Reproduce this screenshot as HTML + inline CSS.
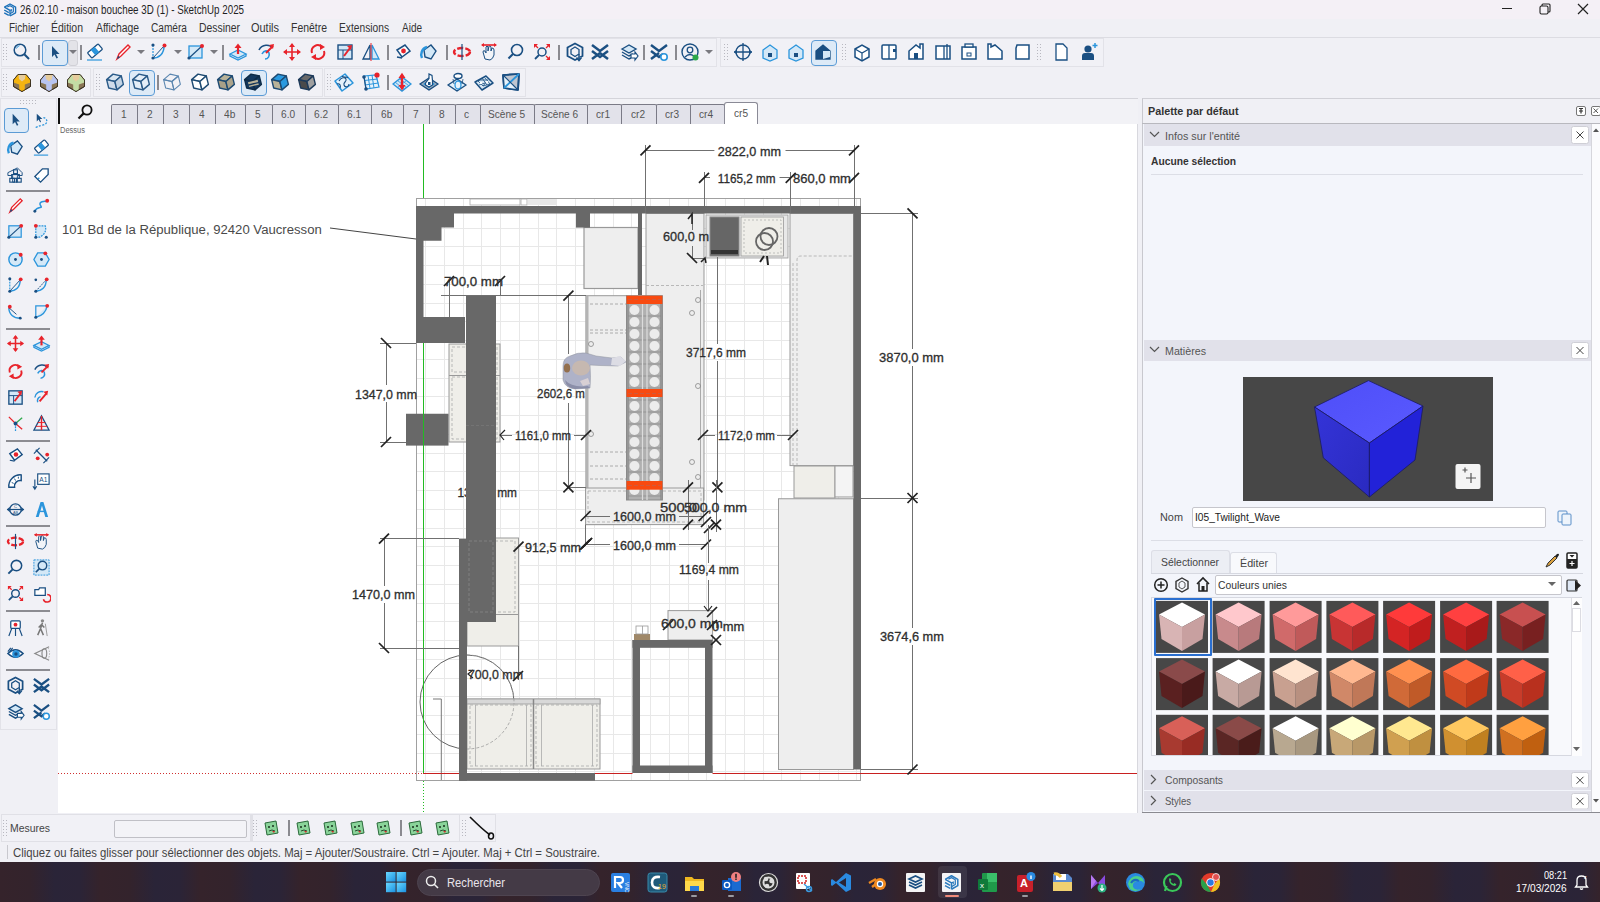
<!DOCTYPE html><html><head><meta charset="utf-8"><style>
*{margin:0;padding:0;box-sizing:border-box}
html,body{width:1600px;height:902px;overflow:hidden;background:#f0f0f5;font-family:"Liberation Sans",sans-serif;color:#333;position:relative}
.a{position:absolute;display:block}
.t{position:absolute;white-space:nowrap}
</style></head><body>
<div class="a" style="left:0px;top:0px;width:1600px;height:19px;background:#f4f0f6;"></div>
<svg class="a" style="left:2px;top:2px;" width="16" height="16" viewBox="0 0 16 16"><g transform="scale(0.8)"><g fill="none" stroke="#1a6fb8" stroke-linejoin="round"><path d="M3 6.5 L10 2.5 L17 6.5 L17 13.5 L10 17.5" stroke-width="1.7"/><path d="M6.5 6.3 L10 4.6 L14.2 7 L14.2 12.3 L10 14.6" stroke-width="1.4"/><path d="M3 6.5 L10 10.5 L10 17.5" stroke-width="1.7"/><path d="M2.8 10 L8.5 13.2 M2.8 13.5 L8.5 16.6" stroke-width="1.7"/><path d="M10 10.5 L12 9.3 L12 12" stroke-width="1.2"/></g></g></svg>
<div class="t" style="left:20.00px;top:4.14px;font-size:12px;line-height:12px;color:#1f1f1f;transform:scaleX(0.8151);transform-origin:0 0;">26.02.10 - maison bouchee 3D (1) - SketchUp 2025</div>
<div class="a" style="left:1502px;top:8px;width:10px;height:1.2px;background:#222;"></div>
<svg class="a" style="left:1539px;top:3px;" width="12" height="12" viewBox="0 0 12 12"><rect x="1" y="3" width="8" height="8" rx="1.5" fill="none" stroke="#222" stroke-width="1.1"/><path d="M3 3 L3 2 Q3 1 4 1 L10 1 Q11 1 11 2 L11 8 Q11 9 10 9 L9 9" fill="none" stroke="#222" stroke-width="1.1"/></svg>
<svg class="a" style="left:1577px;top:3px;" width="12" height="12" viewBox="0 0 12 12"><path d="M1 1 L11 11 M11 1 L1 11" stroke="#222" stroke-width="1.2"/></svg>
<div class="a" style="left:0px;top:19px;width:1600px;height:19px;background:#f0f0f5;"></div>
<div class="t" style="left:9.00px;top:22.34px;font-size:12px;line-height:12px;color:#333;transform:scaleX(0.8332);transform-origin:0 0;">Fichier</div>
<div class="t" style="left:51.00px;top:22.34px;font-size:12px;line-height:12px;color:#333;transform:scaleX(0.8722);transform-origin:0 0;">Édition</div>
<div class="t" style="left:96.00px;top:22.34px;font-size:12px;line-height:12px;color:#333;transform:scaleX(0.8632);transform-origin:0 0;">Affichage</div>
<div class="t" style="left:151.00px;top:22.34px;font-size:12px;line-height:12px;color:#333;transform:scaleX(0.8435);transform-origin:0 0;">Caméra</div>
<div class="t" style="left:199.00px;top:22.34px;font-size:12px;line-height:12px;color:#333;transform:scaleX(0.8659);transform-origin:0 0;">Dessiner</div>
<div class="t" style="left:251.00px;top:22.34px;font-size:12px;line-height:12px;color:#333;transform:scaleX(0.9128);transform-origin:0 0;">Outils</div>
<div class="t" style="left:291.00px;top:22.34px;font-size:12px;line-height:12px;color:#333;transform:scaleX(0.8705);transform-origin:0 0;">Fenêtre</div>
<div class="t" style="left:339.00px;top:22.34px;font-size:12px;line-height:12px;color:#333;transform:scaleX(0.8518);transform-origin:0 0;">Extensions</div>
<div class="t" style="left:402.00px;top:22.34px;font-size:12px;line-height:12px;color:#333;transform:scaleX(0.8327);transform-origin:0 0;">Aide</div>
<div class="a" style="left:0px;top:37px;width:1600px;height:1px;background:#dcdce2;"></div>
<div class="a" style="left:0px;top:38px;width:1600px;height:60px;background:#f0f0f5;"></div>
<div class="a" style="left:1px;top:38px;width:716px;height:29px;background:#f1f1f6;border:1px solid #e2e2e8;"></div>
<div class="a" style="left:720px;top:38px;width:384px;height:29px;background:#f1f1f6;border:1px solid #e2e2e8;"></div>
<div class="a" style="left:1px;top:68px;width:90px;height:29px;background:#f1f1f6;border:1px solid #e2e2e8;"></div>
<div class="a" style="left:93px;top:68px;width:230px;height:29px;background:#f1f1f6;border:1px solid #e2e2e8;"></div>
<div class="a" style="left:324px;top:68px;width:202px;height:29px;background:#f1f1f6;border:1px solid #e2e2e8;"></div>
<svg class="a" style="left:3px;top:44px;" width="4" height="18" viewBox="0 0 4 18"><rect x="0" y="0" width="1" height="1" fill="#b8b8c0"/><rect x="3" y="0" width="1" height="1" fill="#b8b8c0"/><rect x="0" y="3" width="1" height="1" fill="#b8b8c0"/><rect x="3" y="3" width="1" height="1" fill="#b8b8c0"/><rect x="0" y="6" width="1" height="1" fill="#b8b8c0"/><rect x="3" y="6" width="1" height="1" fill="#b8b8c0"/><rect x="0" y="9" width="1" height="1" fill="#b8b8c0"/><rect x="3" y="9" width="1" height="1" fill="#b8b8c0"/><rect x="0" y="12" width="1" height="1" fill="#b8b8c0"/><rect x="3" y="12" width="1" height="1" fill="#b8b8c0"/><rect x="0" y="15" width="1" height="1" fill="#b8b8c0"/><rect x="3" y="15" width="1" height="1" fill="#b8b8c0"/></svg>
<svg class="a" style="left:12px;top:42px;" width="20" height="20" viewBox="0 0 20 20"><g transform="scale(1.0)"><circle cx="8" cy="8" r="5.8" fill="none" stroke="#1a4f82" stroke-width="1.5"/><path d="M4.5 6.5a4 4 0 0 1 3-2.8" stroke="#2b95dc" stroke-width="1" fill="none"/><line x1="12.3" y1="12.3" x2="17" y2="17" stroke="#1a4f82" stroke-width="2"/></g></svg>
<div class="a" style="left:38px;top:45px;width:2px;height:15px;background:#8a8a90;"></div>
<div class="a" style="left:42px;top:40px;width:26px;height:26px;background:#ddeaf7;border:1.3px solid #5b9bd5;border-radius:4px;"></div>
<svg class="a" style="left:45px;top:42px;" width="20" height="20" viewBox="0 0 20 20"><g transform="scale(1.0)"><path d="M7 4 L7 15 L9.5 12.5 L11.5 16.5 L13 15.8 L11 12 L14.5 12 Z" fill="#1a4f82"/></g></svg>
<div class="a" style="left:68px;top:40px;width:10px;height:26px;background:#e3e3e8;border:1px solid #d0d0d6;border-radius:3px;"></div>
<svg class="a" style="left:69px;top:50px;" width="8" height="5" viewBox="0 0 8 5"><path d="M0 0 L8 0 L4 4Z" fill="#7a7a80"/></svg>
<div class="a" style="left:80px;top:45px;width:2px;height:15px;background:#8a8a90;"></div>
<svg class="a" style="left:85px;top:42px;" width="20" height="20" viewBox="0 0 20 20"><g transform="scale(1.0)"><g transform="rotate(-40 10 9)"><rect x="3" y="5.5" width="14" height="7" rx="1" fill="#fff" stroke="#1a4f82" stroke-width="1.3"/><rect x="7.5" y="5.5" width="5" height="7" fill="#2b95dc"/></g><line x1="2" y1="18" x2="17" y2="18" stroke="#2b95dc" stroke-width="1.2"/></g></svg>
<svg class="a" style="left:113px;top:42px;" width="20" height="20" viewBox="0 0 20 20"><g transform="scale(1.0)"><path d="M4 17 L6 12 L15 3 L17 5 L8 14 Z" fill="#fff" stroke="#e8232b" stroke-width="1.4"/><path d="M4 17 L5.2 13.8 L7 15.5Z" fill="#1a4f82"/></g></svg>
<svg class="a" style="left:137px;top:50px;" width="8" height="5" viewBox="0 0 8 5"><path d="M0 0 L8 0 L4 4Z" fill="#7a7a80"/></svg>
<svg class="a" style="left:149px;top:42px;" width="20" height="20" viewBox="0 0 20 20"><g transform="scale(1.0)"><line x1="4" y1="3" x2="4" y2="16" stroke="#2b95dc" stroke-width="1.2" stroke-dasharray="2 1"/><path d="M4 16 C10 16 15 12 15 4" fill="none" stroke="#2b95dc" stroke-width="1.5"/><line x1="4" y1="16" x2="15" y2="4" stroke="#1a4f82" stroke-width="1"/><circle cx="4" cy="3" r="1.6" fill="#1a4f82"/><circle cx="4" cy="16" r="1.6" fill="#1a4f82"/><circle cx="15.5" cy="3.5" r="2" fill="#e8232b"/></g></svg>
<svg class="a" style="left:174px;top:50px;" width="8" height="5" viewBox="0 0 8 5"><path d="M0 0 L8 0 L4 4Z" fill="#7a7a80"/></svg>
<svg class="a" style="left:186px;top:42px;" width="20" height="20" viewBox="0 0 20 20"><g transform="scale(1.0)"><rect x="3" y="4" width="13" height="12" fill="#d4e8f7" stroke="#2b95dc" stroke-width="1.3"/><line x1="3" y1="16" x2="16" y2="4" stroke="#1a4f82" stroke-width="1.2"/><circle cx="3" cy="16" r="1.6" fill="#1a4f82"/><circle cx="16" cy="4" r="2" fill="#e8232b"/></g></svg>
<svg class="a" style="left:210px;top:50px;" width="8" height="5" viewBox="0 0 8 5"><path d="M0 0 L8 0 L4 4Z" fill="#7a7a80"/></svg>
<div class="a" style="left:222px;top:45px;width:2px;height:15px;background:#8a8a90;"></div>
<svg class="a" style="left:228px;top:42px;" width="20" height="20" viewBox="0 0 20 20"><g transform="scale(1.0)"><path d="M2 12 L10 8 L18 12 L10 16Z" fill="#d4e8f7" stroke="#2b95dc" stroke-width="1.3"/><path d="M2 12 L2 14 L10 18 L18 14 L18 12" fill="none" stroke="#2b95dc" stroke-width="1.3"/><path d="M10 12 L10 5" stroke="#e8232b" stroke-width="2.2"/><path d="M6.5 6 L10 1.5 L13.5 6Z" fill="#e8232b"/></g></svg>
<svg class="a" style="left:256px;top:42px;" width="20" height="20" viewBox="0 0 20 20"><g transform="scale(1.0)"><path d="M3 8 C6 2 14 2 16 6" fill="none" stroke="#1a4f82" stroke-width="1.6"/><path d="M6 12 C8 8 12 8 13 11 C14 14 12 17 9 17" fill="none" stroke="#2b95dc" stroke-width="1.6"/><path d="M10 11 L17 4" stroke="#e8232b" stroke-width="2"/><path d="M13 3 L18 2 L17 7Z" fill="#e8232b"/></g></svg>
<svg class="a" style="left:282px;top:42px;" width="20" height="20" viewBox="0 0 20 20"><g transform="scale(1.0)"><path d="M10 2 L10 18 M2 10 L18 10" stroke="#e8232b" stroke-width="1.6"/><path d="M10 1 L7 5 L13 5Z M10 19 L7 15 L13 15Z M1 10 L5 7 L5 13Z M19 10 L15 7 L15 13Z" fill="#e8232b"/></g></svg>
<svg class="a" style="left:308px;top:42px;" width="20" height="20" viewBox="0 0 20 20"><g transform="scale(1.0)"><path d="M4 11 A6 6 0 0 1 14 5" fill="none" stroke="#e8232b" stroke-width="2"/><path d="M16 9 A6 6 0 0 1 6 15" fill="none" stroke="#e8232b" stroke-width="2"/><path d="M12 2 L17 5 L12 8Z M8 12 L3 15 L8 18Z" fill="#e8232b"/></g></svg>
<svg class="a" style="left:335px;top:42px;" width="20" height="20" viewBox="0 0 20 20"><g transform="scale(1.0)"><rect x="3" y="3" width="14" height="14" fill="#d4e8f7" stroke="#1a4f82" stroke-width="1.4"/><line x1="3" y1="8" x2="17" y2="8" stroke="#1a4f82" stroke-width="1"/><line x1="8" y1="8" x2="8" y2="17" stroke="#1a4f82" stroke-width="1"/><path d="M9 14 L15 6" stroke="#e8232b" stroke-width="2"/><path d="M12 4 L17 3 L16 8Z" fill="#e8232b"/></g></svg>
<svg class="a" style="left:361px;top:42px;" width="20" height="20" viewBox="0 0 20 20"><g transform="scale(1.0)"><path d="M9 3 L2 17 L9 17Z" fill="none" stroke="#1a4f82" stroke-width="1.3"/><path d="M11 3 L18 17 L11 17Z" fill="#d4e8f7" stroke="#2b95dc" stroke-width="1.3"/><line x1="10" y1="1" x2="10" y2="19" stroke="#e8232b" stroke-width="1"/></g></svg>
<div class="a" style="left:387px;top:45px;width:2px;height:15px;background:#8a8a90;"></div>
<svg class="a" style="left:393px;top:42px;" width="20" height="20" viewBox="0 0 20 20"><g transform="scale(1.0)"><path d="M4 8 L12 3 L17 9 L9 15Z" fill="#fff" stroke="#1a4f82" stroke-width="1.5"/><circle cx="10.5" cy="9" r="2.4" fill="#e8232b"/><path d="M4 15 L9 16" stroke="#1a4f82" stroke-width="1.3"/></g></svg>
<svg class="a" style="left:419px;top:42px;" width="20" height="20" viewBox="0 0 20 20"><g transform="scale(1.0)"><path d="M5 8 L12 3 L17 9 L12 17 L6 15Z" fill="#d4e8f7" stroke="#1a4f82" stroke-width="1.4"/><path d="M8 5 C3 6 1 12 3 16" fill="none" stroke="#2b95dc" stroke-width="2.5"/></g></svg>
<div class="a" style="left:446px;top:45px;width:2px;height:15px;background:#8a8a90;"></div>
<svg class="a" style="left:452px;top:42px;" width="20" height="20" viewBox="0 0 20 20"><g transform="scale(1.0)"><ellipse cx="10" cy="10" rx="8" ry="4" fill="none" stroke="#e8232b" stroke-width="2.4" stroke-dasharray="6 2"/><line x1="10" y1="2" x2="10" y2="18" stroke="#1a4f82" stroke-width="1.2"/></g></svg>
<svg class="a" style="left:479px;top:42px;" width="20" height="20" viewBox="0 0 20 20"><g transform="scale(1.0)"><path d="M6 17 L4 10 Q4 8 6 9 L7 11 L7 5 Q8 3 9 5 L9 9 L10 4 Q11 3 12 5 L12 9 L13 6 Q15 6 15 8 L15 13 Q14 17 11 18Z" fill="#f2f4f8" stroke="#1a4f82" stroke-width="1"/><path d="M3 3 L17 3" stroke="#e8232b" stroke-width="1.6"/><path d="M2 3 L5 1 L5 5Z M18 3 L15 1 L15 5Z" fill="#e8232b"/></g></svg>
<svg class="a" style="left:506px;top:42px;" width="20" height="20" viewBox="0 0 20 20"><g transform="scale(1.0)"><circle cx="11" cy="8" r="5.5" fill="none" stroke="#1a4f82" stroke-width="1.6"/><line x1="7" y1="12" x2="2.5" y2="16.5" stroke="#1a4f82" stroke-width="2"/></g></svg>
<svg class="a" style="left:532px;top:42px;" width="20" height="20" viewBox="0 0 20 20"><g transform="scale(1.0)"><circle cx="10" cy="10" r="4" fill="none" stroke="#1a4f82" stroke-width="1.5"/><line x1="7" y1="13" x2="3" y2="17" stroke="#1a4f82" stroke-width="1.8"/><path d="M2 2 L6 2 L2 6Z M18 2 L14 2 L18 6Z M18 18 L14 18 L18 14Z" fill="#e8232b"/><path d="M3 3 L6 6 M17 3 L14 6 M17 17 L14 14" stroke="#e8232b" stroke-width="1.3"/></g></svg>
<div class="a" style="left:558px;top:45px;width:2px;height:15px;background:#8a8a90;"></div>
<svg class="a" style="left:565px;top:42px;" width="20" height="20" viewBox="0 0 20 20"><g transform="scale(1.0)"><path d="M10 1.5 L17.5 5.5 L17.5 14 L10 18 L2.5 14 L2.5 5.5Z" fill="none" stroke="#1a4f82" stroke-width="1.8"/><path d="M10 5 L14 7.5 L14 12 L10 14.5 L6 12 L6 7.5Z" fill="none" stroke="#1a4f82" stroke-width="1.3"/><path d="M14 12 L14 18 M11.5 15.5 L14 18.5 L16.5 15.5" stroke="#1a4f82" stroke-width="1.5" fill="#fff"/></g></svg>
<svg class="a" style="left:590px;top:42px;" width="20" height="20" viewBox="0 0 20 20"><g transform="scale(1.0)"><path d="M2 3 L10 9 L18 3 M2 9 L10 15 L18 9 M2 17 L10 11 L18 17" fill="none" stroke="#1a4f82" stroke-width="2.5"/></g></svg>
<svg class="a" style="left:619px;top:42px;" width="20" height="20" viewBox="0 0 20 20"><g transform="scale(1.0)"><path d="M3 7 L10 3 L17 7 L10 11Z" fill="#d4e8f7" stroke="#1a4f82" stroke-width="1.4"/><path d="M3 10 L10 14 L14 12 M3 13 L10 17 L12 16" fill="none" stroke="#1a4f82" stroke-width="1.4"/><path d="M12 12 L16 12 L16 10 L19 14 L16 18 L16 16 L12 16Z" fill="#fff" stroke="#1a4f82" stroke-width="1.2"/></g></svg>
<div class="a" style="left:643px;top:45px;width:2px;height:15px;background:#8a8a90;"></div>
<svg class="a" style="left:649px;top:42px;" width="20" height="20" viewBox="0 0 20 20"><g transform="scale(1.0)"><path d="M2 3 L10 9 L18 3 M2 9 L10 15 L14 12 M2 17 L10 11" fill="none" stroke="#1a4f82" stroke-width="2.4"/><circle cx="15" cy="15" r="3.2" fill="#fff" stroke="#2b95dc" stroke-width="1.6"/></g></svg>
<div class="a" style="left:675px;top:45px;width:2px;height:15px;background:#8a8a90;"></div>
<svg class="a" style="left:680px;top:42px;" width="20" height="20" viewBox="0 0 20 20"><g transform="scale(1.0)"><circle cx="10" cy="10" r="8" fill="none" stroke="#1a4f82" stroke-width="1.4"/><circle cx="10" cy="8" r="2.8" fill="none" stroke="#1a4f82" stroke-width="1.3"/><path d="M5 15 Q10 10 15 15" fill="none" stroke="#1a4f82" stroke-width="1.3"/><circle cx="15.5" cy="15.5" r="3" fill="#2ca84a"/></g></svg>
<svg class="a" style="left:705px;top:50px;" width="8" height="5" viewBox="0 0 8 5"><path d="M0 0 L8 0 L4 4Z" fill="#7a7a80"/></svg>
<svg class="a" style="left:724px;top:44px;" width="4" height="18" viewBox="0 0 4 18"><rect x="0" y="0" width="1" height="1" fill="#b8b8c0"/><rect x="3" y="0" width="1" height="1" fill="#b8b8c0"/><rect x="0" y="3" width="1" height="1" fill="#b8b8c0"/><rect x="3" y="3" width="1" height="1" fill="#b8b8c0"/><rect x="0" y="6" width="1" height="1" fill="#b8b8c0"/><rect x="3" y="6" width="1" height="1" fill="#b8b8c0"/><rect x="0" y="9" width="1" height="1" fill="#b8b8c0"/><rect x="3" y="9" width="1" height="1" fill="#b8b8c0"/><rect x="0" y="12" width="1" height="1" fill="#b8b8c0"/><rect x="3" y="12" width="1" height="1" fill="#b8b8c0"/><rect x="0" y="15" width="1" height="1" fill="#b8b8c0"/><rect x="3" y="15" width="1" height="1" fill="#b8b8c0"/></svg>
<svg class="a" style="left:733px;top:42px;" width="20" height="20" viewBox="0 0 20 20"><g transform="scale(1.0)"><circle cx="10" cy="10" r="7" fill="none" stroke="#1a4f82" stroke-width="1.3"/><path d="M1 10 L19 10 M10 1 L10 19" stroke="#1a4f82" stroke-width="1.3"/><path d="M1 10 L4 7 L4 13Z M19 10 L16 7 L16 13Z" fill="#1a4f82"/></g></svg>
<svg class="a" style="left:760px;top:42px;" width="20" height="20" viewBox="0 0 20 20"><g transform="scale(1.0)"><path d="M3 8 L10 3 L17 8 L17 16 L10 19 L3 16Z" fill="#d4e8f7" stroke="#2b95dc" stroke-width="1.3"/><path d="M8 11 L12 11 L12 15 L8 15Z" fill="#1a4f82"/></g></svg>
<svg class="a" style="left:786px;top:42px;" width="20" height="20" viewBox="0 0 20 20"><g transform="scale(1.0)"><path d="M3 8 L10 3 L17 8 L17 16 L10 19 L3 16Z" fill="#d4e8f7" stroke="#2b95dc" stroke-width="1.3"/><path d="M8 11 L12 11 L12 15 L8 15Z" fill="#1a4f82"/></g></svg>
<div class="a" style="left:811px;top:40px;width:26px;height:26px;background:#ddeaf7;border:1.3px solid #5b9bd5;border-radius:4px;"></div>
<svg class="a" style="left:813px;top:42px;" width="20" height="20" viewBox="0 0 20 20"><g transform="scale(1.0)"><path d="M3 9 L10 3 L17 9 L17 17 L3 17Z" fill="#1a4f82" stroke="#1a4f82" stroke-width="1.3"/><path d="M10 9 L17 9 L17 15 L10 17Z" fill="#d4e8f7"/></g></svg>
<svg class="a" style="left:842px;top:44px;" width="4" height="18" viewBox="0 0 4 18"><rect x="0" y="0" width="1" height="1" fill="#b8b8c0"/><rect x="3" y="0" width="1" height="1" fill="#b8b8c0"/><rect x="0" y="3" width="1" height="1" fill="#b8b8c0"/><rect x="3" y="3" width="1" height="1" fill="#b8b8c0"/><rect x="0" y="6" width="1" height="1" fill="#b8b8c0"/><rect x="3" y="6" width="1" height="1" fill="#b8b8c0"/><rect x="0" y="9" width="1" height="1" fill="#b8b8c0"/><rect x="3" y="9" width="1" height="1" fill="#b8b8c0"/><rect x="0" y="12" width="1" height="1" fill="#b8b8c0"/><rect x="3" y="12" width="1" height="1" fill="#b8b8c0"/><rect x="0" y="15" width="1" height="1" fill="#b8b8c0"/><rect x="3" y="15" width="1" height="1" fill="#b8b8c0"/></svg>
<svg class="a" style="left:852px;top:42px;" width="20" height="20" viewBox="0 0 20 20"><g transform="scale(1.0)"><path d="M3 7 L10 3 L17 7 L17 15 L10 19 L3 15Z" fill="#fff" stroke="#1a4f82" stroke-width="1.5"/><path d="M3 7 L10 11 L17 7 M10 11 L10 19" fill="none" stroke="#1a4f82" stroke-width="1.2"/></g></svg>
<svg class="a" style="left:879px;top:42px;" width="20" height="20" viewBox="0 0 20 20"><g transform="scale(1.0)"><rect x="3" y="3" width="14" height="14" rx="1" fill="#fff" stroke="#1a4f82" stroke-width="1.5"/><line x1="10" y1="3" x2="10" y2="17" stroke="#1a4f82" stroke-width="1.3"/><rect x="14" y="7" width="3" height="3" fill="#1a4f82"/></g></svg>
<svg class="a" style="left:906px;top:42px;" width="20" height="20" viewBox="0 0 20 20"><g transform="scale(1.0)"><path d="M3 17 L3 9 L10 3 L14 6 L14 2 L17 2 L17 17Z" fill="#fff" stroke="#1a4f82" stroke-width="1.5"/><rect x="8" y="11" width="4" height="6" fill="#1a4f82"/></g></svg>
<svg class="a" style="left:933px;top:42px;" width="20" height="20" viewBox="0 0 20 20"><g transform="scale(1.0)"><rect x="3" y="4" width="14" height="13" fill="#fff" stroke="#1a4f82" stroke-width="1.5"/><line x1="11" y1="4" x2="11" y2="17" stroke="#1a4f82" stroke-width="1.3"/><line x1="14" y1="2" x2="14" y2="17" stroke="#1a4f82" stroke-width="1.3"/></g></svg>
<svg class="a" style="left:959px;top:42px;" width="20" height="20" viewBox="0 0 20 20"><g transform="scale(1.0)"><rect x="3" y="5" width="14" height="12" fill="#fff" stroke="#1a4f82" stroke-width="1.5"/><rect x="6" y="2" width="8" height="3" fill="#fff" stroke="#1a4f82" stroke-width="1.3"/><rect x="8" y="11" width="4" height="3" fill="none" stroke="#1a4f82" stroke-width="1"/></g></svg>
<svg class="a" style="left:985px;top:42px;" width="20" height="20" viewBox="0 0 20 20"><g transform="scale(1.0)"><path d="M3 17 L3 2 L6 2 L6 5 L10 3 L17 9 L17 17Z" fill="#fff" stroke="#1a4f82" stroke-width="1.5"/></g></svg>
<svg class="a" style="left:1012px;top:42px;" width="20" height="20" viewBox="0 0 20 20"><g transform="scale(1.0)"><path d="M5 3 L17 3 L17 17 L4 17 L4 6Z" fill="#fff" stroke="#1a4f82" stroke-width="1.5"/></g></svg>
<svg class="a" style="left:1037px;top:44px;" width="4" height="18" viewBox="0 0 4 18"><rect x="0" y="0" width="1" height="1" fill="#b8b8c0"/><rect x="3" y="0" width="1" height="1" fill="#b8b8c0"/><rect x="0" y="3" width="1" height="1" fill="#b8b8c0"/><rect x="3" y="3" width="1" height="1" fill="#b8b8c0"/><rect x="0" y="6" width="1" height="1" fill="#b8b8c0"/><rect x="3" y="6" width="1" height="1" fill="#b8b8c0"/><rect x="0" y="9" width="1" height="1" fill="#b8b8c0"/><rect x="3" y="9" width="1" height="1" fill="#b8b8c0"/><rect x="0" y="12" width="1" height="1" fill="#b8b8c0"/><rect x="3" y="12" width="1" height="1" fill="#b8b8c0"/><rect x="0" y="15" width="1" height="1" fill="#b8b8c0"/><rect x="3" y="15" width="1" height="1" fill="#b8b8c0"/></svg>
<svg class="a" style="left:1051px;top:42px;" width="20" height="20" viewBox="0 0 20 20"><g transform="scale(1.0)"><path d="M5 2 L12 2 L16 6 L16 18 L5 18Z" fill="#fff" stroke="#1a4f82" stroke-width="1.3"/></g></svg>
<svg class="a" style="left:1079px;top:42px;" width="20" height="20" viewBox="0 0 20 20"><g transform="scale(1.0)"><circle cx="9" cy="7" r="3.6" fill="#1a4f82"/><path d="M3 18 L3 14 Q3 11 6 11 L12 11 Q15 11 15 14 L15 18Z" fill="#1a4f82"/><path d="M16 1 L16 6 M13.5 3.5 L18.5 3.5" stroke="#2b95dc" stroke-width="1.5"/></g></svg>
<svg class="a" style="left:3px;top:74px;" width="4" height="18" viewBox="0 0 4 18"><rect x="0" y="0" width="1" height="1" fill="#b8b8c0"/><rect x="3" y="0" width="1" height="1" fill="#b8b8c0"/><rect x="0" y="3" width="1" height="1" fill="#b8b8c0"/><rect x="3" y="3" width="1" height="1" fill="#b8b8c0"/><rect x="0" y="6" width="1" height="1" fill="#b8b8c0"/><rect x="3" y="6" width="1" height="1" fill="#b8b8c0"/><rect x="0" y="9" width="1" height="1" fill="#b8b8c0"/><rect x="3" y="9" width="1" height="1" fill="#b8b8c0"/><rect x="0" y="12" width="1" height="1" fill="#b8b8c0"/><rect x="3" y="12" width="1" height="1" fill="#b8b8c0"/><rect x="0" y="15" width="1" height="1" fill="#b8b8c0"/><rect x="3" y="15" width="1" height="1" fill="#b8b8c0"/></svg>
<svg class="a" style="left:12px;top:72px;" width="20" height="20" viewBox="0 0 20 20"><g transform="scale(1.0)"><path d="M1.5 8 L6 2.5 L14 2.5 L18.5 8 L18.5 14.5 L10 19.5 L1.5 14.5Z" fill="#8a7656" stroke="#3a3020" stroke-width="0.9" stroke-linejoin="round"/><path d="M1.5 8 L6 2.5 L14 2.5 L18.5 8 L18.5 10.5 L12.8 12.5 L12.8 19 L7.2 19 L7.2 12.5 L1.5 10.5Z" fill="#f4b410"/><path d="M6.5 3 L13.5 3 L13 7 L10 9.5 L7 7Z" fill="#e6cc9c"/><path d="M1.5 8 L6 2.5 L14 2.5 L18.5 8 L18.5 14.5 L10 19.5 L1.5 14.5Z" fill="none" stroke="#3a3020" stroke-width="0.9" stroke-linejoin="round"/></g></svg>
<svg class="a" style="left:39px;top:72px;" width="20" height="20" viewBox="0 0 20 20"><g transform="scale(1.0)"><path d="M1.5 8 L6 2.5 L14 2.5 L18.5 8 L18.5 14.5 L10 19.5 L1.5 14.5Z" fill="#8a7656" stroke="#3a3020" stroke-width="0.9" stroke-linejoin="round"/><path d="M1.5 8 L6 2.5 L14 2.5 L18.5 8 L18.5 10.5 L12.8 12.5 L12.8 19 L7.2 19 L7.2 12.5 L1.5 10.5Z" fill="#b8c4f0"/><path d="M6.5 3 L13.5 3 L13 7 L10 9.5 L7 7Z" fill="#e6cc9c"/><path d="M1.5 8 L6 2.5 L14 2.5 L18.5 8 L18.5 14.5 L10 19.5 L1.5 14.5Z" fill="none" stroke="#3a3020" stroke-width="0.9" stroke-linejoin="round"/></g></svg>
<svg class="a" style="left:66px;top:72px;" width="20" height="20" viewBox="0 0 20 20"><g transform="scale(1.0)"><path d="M1.5 8 L6 2.5 L14 2.5 L18.5 8 L18.5 14.5 L10 19.5 L1.5 14.5Z" fill="#8a7656" stroke="#3a3020" stroke-width="0.9" stroke-linejoin="round"/><path d="M1.5 8 L6 2.5 L14 2.5 L18.5 8 L18.5 10.5 L12.8 12.5 L12.8 19 L7.2 19 L7.2 12.5 L1.5 10.5Z" fill="#c4dca4"/><path d="M6.5 3 L13.5 3 L13 7 L10 9.5 L7 7Z" fill="#e6cc9c"/><path d="M1.5 8 L6 2.5 L14 2.5 L18.5 8 L18.5 14.5 L10 19.5 L1.5 14.5Z" fill="none" stroke="#3a3020" stroke-width="0.9" stroke-linejoin="round"/></g></svg>
<svg class="a" style="left:96px;top:74px;" width="4" height="18" viewBox="0 0 4 18"><rect x="0" y="0" width="1" height="1" fill="#b8b8c0"/><rect x="3" y="0" width="1" height="1" fill="#b8b8c0"/><rect x="0" y="3" width="1" height="1" fill="#b8b8c0"/><rect x="3" y="3" width="1" height="1" fill="#b8b8c0"/><rect x="0" y="6" width="1" height="1" fill="#b8b8c0"/><rect x="3" y="6" width="1" height="1" fill="#b8b8c0"/><rect x="0" y="9" width="1" height="1" fill="#b8b8c0"/><rect x="3" y="9" width="1" height="1" fill="#b8b8c0"/><rect x="0" y="12" width="1" height="1" fill="#b8b8c0"/><rect x="3" y="12" width="1" height="1" fill="#b8b8c0"/><rect x="0" y="15" width="1" height="1" fill="#b8b8c0"/><rect x="3" y="15" width="1" height="1" fill="#b8b8c0"/></svg>
<svg class="a" style="left:105px;top:72px;" width="20" height="20" viewBox="0 0 20 20"><g transform="scale(1.0)"><g transform="translate(10 10) rotate(-14) scale(1.08) translate(-10 -10)"><path d="M3 6 L10 2.5 L17 6 L10 9.5Z" fill="#dbe6f0" stroke="#2a5a88" stroke-width="1.3" stroke-linejoin="round"/><path d="M3 6 L10 9.5 L10 17.5 L3 14Z" fill="#d0dcea" stroke="#2a5a88" stroke-width="1.3" stroke-linejoin="round"/><path d="M17 6 L10 9.5 L10 17.5 L17 14Z" fill="#c4d4e4" stroke="#2a5a88" stroke-width="1.3" stroke-linejoin="round"/></g></g></svg>
<div class="a" style="left:129px;top:70px;width:26px;height:26px;background:#ddeaf7;border:1.3px solid #5b9bd5;border-radius:4px;"></div>
<svg class="a" style="left:131px;top:72px;" width="20" height="20" viewBox="0 0 20 20"><g transform="scale(1.0)"><g transform="translate(10 10) rotate(-14) scale(1.08) translate(-10 -10)"><path d="M3 6 L10 2.5 L17 6 L10 9.5Z" fill="#e4eef8" stroke="#2a5a88" stroke-width="1.3" stroke-linejoin="round"/><path d="M3 6 L10 9.5 L10 17.5 L3 14Z" fill="#e4eef8" stroke="#2a5a88" stroke-width="1.3" stroke-linejoin="round"/><path d="M17 6 L10 9.5 L10 17.5 L17 14Z" fill="#e4eef8" stroke="#2a5a88" stroke-width="1.3" stroke-linejoin="round"/></g></g></svg>
<div class="a" style="left:157px;top:75px;width:2px;height:15px;background:#8a8a90;"></div>
<svg class="a" style="left:162px;top:72px;" width="20" height="20" viewBox="0 0 20 20"><g transform="scale(1.0)"><g transform="translate(10 10) rotate(-14) scale(1.08) translate(-10 -10)"><path d="M3 6 L10 2.5 L17 6 L10 9.5Z" fill="none" stroke="#5a86b0" stroke-width="1" stroke-linejoin="round"/><path d="M3 6 L10 9.5 L10 17.5 L3 14Z" fill="none" stroke="#5a86b0" stroke-width="1" stroke-linejoin="round"/><path d="M17 6 L10 9.5 L10 17.5 L17 14Z" fill="none" stroke="#5a86b0" stroke-width="1" stroke-linejoin="round"/></g></g></svg>
<svg class="a" style="left:190px;top:72px;" width="20" height="20" viewBox="0 0 20 20"><g transform="scale(1.0)"><g transform="translate(10 10) rotate(-14) scale(1.08) translate(-10 -10)"><path d="M3 6 L10 2.5 L17 6 L10 9.5Z" fill="#fff" stroke="#1d4a72" stroke-width="1.3" stroke-linejoin="round"/><path d="M3 6 L10 9.5 L10 17.5 L3 14Z" fill="#fff" stroke="#1d4a72" stroke-width="1.3" stroke-linejoin="round"/><path d="M17 6 L10 9.5 L10 17.5 L17 14Z" fill="#fff" stroke="#1d4a72" stroke-width="1.3" stroke-linejoin="round"/></g></g></svg>
<svg class="a" style="left:216px;top:72px;" width="20" height="20" viewBox="0 0 20 20"><g transform="scale(1.0)"><g transform="translate(10 10) rotate(-14) scale(1.08) translate(-10 -10)"><path d="M3 6 L10 2.5 L17 6 L10 9.5Z" fill="#b8b298" stroke="#1d4a72" stroke-width="1.3" stroke-linejoin="round"/><path d="M3 6 L10 9.5 L10 17.5 L3 14Z" fill="#a8a088" stroke="#1d4a72" stroke-width="1.3" stroke-linejoin="round"/><path d="M17 6 L10 9.5 L10 17.5 L17 14Z" fill="#aca48c" stroke="#1d4a72" stroke-width="1.3" stroke-linejoin="round"/></g></g></svg>
<div class="a" style="left:241px;top:70px;width:26px;height:26px;background:#ddeaf7;border:1.3px solid #5b9bd5;border-radius:4px;"></div>
<svg class="a" style="left:243px;top:72px;" width="20" height="20" viewBox="0 0 20 20"><g transform="scale(1.0)"><g transform="translate(10 10) rotate(-14) scale(1.08) translate(-10 -10)"><path d="M3 6 L10 2.5 L17 6 L10 9.5Z" fill="#13385e" stroke="#0e2c48" stroke-width="1.3" stroke-linejoin="round"/><path d="M3 6 L10 9.5 L10 17.5 L3 14Z" fill="#13385e" stroke="#0e2c48" stroke-width="1.3" stroke-linejoin="round"/><path d="M17 6 L10 9.5 L10 17.5 L17 14Z" fill="#13385e" stroke="#0e2c48" stroke-width="1.3" stroke-linejoin="round"/></g><g transform="translate(10 10) rotate(-14) translate(-10 -10)"><rect x="5" y="9" width="10" height="2.2" fill="#b8b298"/><rect x="5" y="12.5" width="10" height="1.5" fill="#b8b298"/></g></g></svg>
<svg class="a" style="left:270px;top:72px;" width="20" height="20" viewBox="0 0 20 20"><g transform="scale(1.0)"><g transform="translate(10 10) rotate(-14) scale(1.08) translate(-10 -10)"><path d="M3 6 L10 2.5 L17 6 L10 9.5Z" fill="#2a9ae0" stroke="#1d4a72" stroke-width="1.3" stroke-linejoin="round"/><path d="M3 6 L10 9.5 L10 17.5 L3 14Z" fill="#b8b298" stroke="#1d4a72" stroke-width="1.3" stroke-linejoin="round"/><path d="M17 6 L10 9.5 L10 17.5 L17 14Z" fill="#2a9ae0" stroke="#1d4a72" stroke-width="1.3" stroke-linejoin="round"/></g></g></svg>
<svg class="a" style="left:297px;top:72px;" width="20" height="20" viewBox="0 0 20 20"><g transform="scale(1.0)"><g transform="translate(10 10) rotate(-14) scale(1.08) translate(-10 -10)"><path d="M3 6 L10 2.5 L17 6 L10 9.5Z" fill="#6a6a6a" stroke="#1d3a5a" stroke-width="1.3" stroke-linejoin="round"/><path d="M3 6 L10 9.5 L10 17.5 L3 14Z" fill="#4a4a4a" stroke="#1d3a5a" stroke-width="1.3" stroke-linejoin="round"/><path d="M17 6 L10 9.5 L10 17.5 L17 14Z" fill="#a0a0a0" stroke="#1d3a5a" stroke-width="1.3" stroke-linejoin="round"/></g></g></svg>
<svg class="a" style="left:327px;top:74px;" width="4" height="18" viewBox="0 0 4 18"><rect x="0" y="0" width="1" height="1" fill="#b8b8c0"/><rect x="3" y="0" width="1" height="1" fill="#b8b8c0"/><rect x="0" y="3" width="1" height="1" fill="#b8b8c0"/><rect x="3" y="3" width="1" height="1" fill="#b8b8c0"/><rect x="0" y="6" width="1" height="1" fill="#b8b8c0"/><rect x="3" y="6" width="1" height="1" fill="#b8b8c0"/><rect x="0" y="9" width="1" height="1" fill="#b8b8c0"/><rect x="3" y="9" width="1" height="1" fill="#b8b8c0"/><rect x="0" y="12" width="1" height="1" fill="#b8b8c0"/><rect x="3" y="12" width="1" height="1" fill="#b8b8c0"/><rect x="0" y="15" width="1" height="1" fill="#b8b8c0"/><rect x="3" y="15" width="1" height="1" fill="#b8b8c0"/></svg>
<svg class="a" style="left:334px;top:72px;" width="20" height="20" viewBox="0 0 20 20"><g transform="scale(1.0)"><path d="M1 9 L11 2 L19 11 L8 19Z" fill="#e6f2fb" stroke="#2b95dc" stroke-width="1.5" stroke-linejoin="round"/><path d="M5 9 C7 5 11 5 12 7 C13 10 9 10 10 13 C11 16 15 15 15 12 M3 12 C6 11 7 14 6 16 M8 4 C9 6 13 4 14 6" fill="none" stroke="#1a4f82" stroke-width="1.1"/></g></svg>
<svg class="a" style="left:361px;top:72px;" width="20" height="20" viewBox="0 0 20 20"><g transform="scale(1.0)"><path d="M3 4 L15 3 L18 15 L5 17Z" fill="#e6f2fb" stroke="#2b95dc" stroke-width="1.2"/><path d="M3.5 8.5 L16.5 7 M4 13 L17.5 11 M7 3.5 L9 16.5 M11 3.2 L13 16" stroke="#2b95dc" stroke-width="1"/><circle cx="16" cy="3" r="2.6" fill="#e8232b"/><circle cx="3" cy="5" r="1.8" fill="#1a4f82"/><circle cx="5" cy="17" r="1.8" fill="#1a4f82"/><path d="M3 5L5 17" stroke="#1a4f82" stroke-width="1.2"/></g></svg>
<div class="a" style="left:387px;top:75px;width:2px;height:15px;background:#8a8a90;"></div>
<svg class="a" style="left:392px;top:72px;" width="20" height="20" viewBox="0 0 20 20"><g transform="scale(1.0)"><path d="M1 12 L10 5 L19 12 L10 19Z" fill="#cfe6f7" stroke="#2b95dc" stroke-width="1.4"/><path d="M5.5 8.5L14.5 15.5M5.5 15.5L14.5 8.5M3.2 10.3L12 17M8 7L16.8 13.7" stroke="#2b95dc" stroke-width="0.8"/><path d="M10 3.5 L10 15.5" stroke="#e8232b" stroke-width="2.4"/><path d="M6.5 6 L10 0.8 L13.5 6Z M6.5 13 L10 18.5 L13.5 13Z" fill="#e8232b"/></g></svg>
<svg class="a" style="left:419px;top:72px;" width="20" height="20" viewBox="0 0 20 20"><g transform="scale(1.0)"><path d="M1 12 L10 6 L19 12 L10 18Z" fill="#a8b0bc" stroke="#1a4f82" stroke-width="1.5" stroke-linejoin="round"/><path d="M4 12 L10 8 L16 12 L10 16Z" fill="#2b95dc"/><path d="M6.5 11 L10 6.5 L10 2 L13 3.5 L13.5 9 L13.5 13 L10 15 L6.5 13Z" fill="#fff" stroke="#1a4f82" stroke-width="1.2"/><rect x="9" y="10" width="2.5" height="3" fill="#1a4f82"/></g></svg>
<svg class="a" style="left:447px;top:72px;" width="20" height="20" viewBox="0 0 20 20"><g transform="scale(1.0)"><path d="M1 13 L10 7 L19 13 L10 19Z" fill="#e6f2fb" stroke="#1a4f82" stroke-width="1.5" stroke-linejoin="round"/><ellipse cx="11" cy="4" rx="4" ry="2.5" fill="#fff" stroke="#1a4f82" stroke-width="1.4"/><ellipse cx="11" cy="13" rx="3" ry="4" fill="none" stroke="#2b95dc" stroke-width="1.3"/><path d="M6 7 L7 12 M16 7 L15 12" stroke="#1a4f82" stroke-width="0.8"/></g></svg>
<svg class="a" style="left:474px;top:72px;" width="20" height="20" viewBox="0 0 20 20"><g transform="scale(1.0)"><path d="M1 10 L12 4 L19 11 L8 18Z" fill="#d8e8f4" stroke="#1a4f82" stroke-width="1.5" stroke-linejoin="round"/><path d="M4 9 L9 14 L14 8 L6 8Z M9 14 L16 12 L11 6 M5 13 L11 11 M8 6 L13 13" fill="none" stroke="#1a4f82" stroke-width="0.8"/><circle cx="7" cy="11" r="1.2" fill="#fff"/><circle cx="13" cy="10" r="1.2" fill="#fff"/></g></svg>
<svg class="a" style="left:501px;top:72px;" width="20" height="20" viewBox="0 0 20 20"><g transform="scale(1.0)"><path d="M2 3 L18 2 L17 18 L3 16Z" fill="#c0c6d0" stroke="#1a4f82" stroke-width="1.7" stroke-linejoin="round"/><path d="M2 3 L17 18 L3 16Z" fill="#e6f2fb"/><path d="M2 3 L18 2 L17 18 L3 16Z" fill="none" stroke="#1a4f82" stroke-width="1.7" stroke-linejoin="round"/><line x1="3" y1="16" x2="18" y2="2" stroke="#2b95dc" stroke-width="1.8"/><line x1="2" y1="3" x2="17" y2="18" stroke="#1a4f82" stroke-width="1.2"/></g></svg>
<div class="a" style="left:0px;top:98px;width:1600px;height:1px;background:#d4d4da;"></div>
<div class="a" style="left:0px;top:98px;width:58px;height:715px;background:#f0f0f5;"></div>
<div class="a" style="left:0px;top:98px;width:57px;height:632px;background:#f1f1f6;border:1px solid #e2e2e8;"></div>
<svg class="a" style="left:20px;top:100px;" width="18" height="4" viewBox="0 0 18 4"><rect x="0" y="0" width="1" height="1" fill="#b8b8c0"/><rect x="0" y="3" width="1" height="1" fill="#b8b8c0"/><rect x="3" y="0" width="1" height="1" fill="#b8b8c0"/><rect x="3" y="3" width="1" height="1" fill="#b8b8c0"/><rect x="6" y="0" width="1" height="1" fill="#b8b8c0"/><rect x="6" y="3" width="1" height="1" fill="#b8b8c0"/><rect x="9" y="0" width="1" height="1" fill="#b8b8c0"/><rect x="9" y="3" width="1" height="1" fill="#b8b8c0"/><rect x="12" y="0" width="1" height="1" fill="#b8b8c0"/><rect x="12" y="3" width="1" height="1" fill="#b8b8c0"/><rect x="15" y="0" width="1" height="1" fill="#b8b8c0"/><rect x="15" y="3" width="1" height="1" fill="#b8b8c0"/></svg>
<div class="a" style="left:4px;top:108px;width:25px;height:25px;background:#ddeaf7;border:1.3px solid #5b9bd5;border-radius:4px;"></div>
<svg class="a" style="left:6px;top:110px;" width="19" height="19" viewBox="0 0 19 19"><g transform="scale(0.95)"><path d="M7 4 L7 15 L9.5 12.5 L11.5 16.5 L13 15.8 L11 12 L14.5 12 Z" fill="#1a4f82"/></g></svg>
<svg class="a" style="left:32px;top:110px;" width="19" height="19" viewBox="0 0 19 19"><g transform="scale(0.95)"><path d="M5 4 L5 12 L7 10 L8.5 13 L9.5 12.5 L8.3 9.6 L11 9.6Z" fill="#1a4f82"/><path d="M12 8 C17 9 17 15 11 16 C7 17 4 18 3 19" fill="none" stroke="#2b95dc" stroke-width="1.3" stroke-dasharray="2 1.5"/></g></svg>
<svg class="a" style="left:6px;top:138px;" width="19" height="19" viewBox="0 0 19 19"><g transform="scale(0.95)"><path d="M5 8 L12 3 L17 9 L12 17 L6 15Z" fill="#d4e8f7" stroke="#1a4f82" stroke-width="1.4"/><path d="M8 5 C3 6 1 12 3 16" fill="none" stroke="#2b95dc" stroke-width="2.5"/></g></svg>
<svg class="a" style="left:32px;top:138px;" width="19" height="19" viewBox="0 0 19 19"><g transform="scale(0.95)"><g transform="rotate(-40 10 9)"><rect x="3" y="5.5" width="14" height="7" rx="1" fill="#fff" stroke="#1a4f82" stroke-width="1.3"/><rect x="7.5" y="5.5" width="5" height="7" fill="#2b95dc"/></g><line x1="2" y1="18" x2="17" y2="18" stroke="#2b95dc" stroke-width="1.2"/></g></svg>
<svg class="a" style="left:6px;top:166px;" width="19" height="19" viewBox="0 0 19 19"><g transform="scale(0.95)"><path d="M10 2 L15 7 L15 10 L10 10 L10 17 L5 17 L5 10 L0 10 L0 7Z" transform="translate(2 0)" fill="none" stroke="#1a4f82" stroke-width="1"/><rect x="6" y="9" width="8" height="4" fill="none" stroke="#1a4f82" stroke-width="1.2"/><rect x="8" y="4" width="4" height="4" fill="none" stroke="#1a4f82" stroke-width="1.2"/><rect x="4" y="13" width="5" height="4" fill="none" stroke="#1a4f82" stroke-width="1.2"/><rect x="11" y="13" width="5" height="4" fill="none" stroke="#1a4f82" stroke-width="1.2"/></g></svg>
<svg class="a" style="left:32px;top:166px;" width="19" height="19" viewBox="0 0 19 19"><g transform="scale(0.95)"><path d="M3 11 L11 3 L17 3 L17 9 L9 17Z" fill="#fff" stroke="#1a4f82" stroke-width="1.4"/><circle cx="7" cy="13" r="1" fill="#2b95dc"/></g></svg>
<svg class="a" style="left:6px;top:196px;" width="19" height="19" viewBox="0 0 19 19"><g transform="scale(0.95)"><path d="M4 17 L6 12 L15 3 L17 5 L8 14 Z" fill="#fff" stroke="#e8232b" stroke-width="1.4"/><path d="M4 17 L5.2 13.8 L7 15.5Z" fill="#1a4f82"/></g></svg>
<svg class="a" style="left:32px;top:196px;" width="19" height="19" viewBox="0 0 19 19"><g transform="scale(0.95)"><path d="M3 16 C6 10 12 14 9 10 C6 6 14 5 15 6" fill="none" stroke="#2b95dc" stroke-width="1.6"/><circle cx="16" cy="5" r="2" fill="#e8232b"/><circle cx="3" cy="16" r="1.5" fill="#1a4f82"/></g></svg>
<svg class="a" style="left:6px;top:222px;" width="19" height="19" viewBox="0 0 19 19"><g transform="scale(0.95)"><rect x="3" y="4" width="13" height="12" fill="#d4e8f7" stroke="#2b95dc" stroke-width="1.3"/><line x1="3" y1="16" x2="16" y2="4" stroke="#1a4f82" stroke-width="1.2"/><circle cx="3" cy="16" r="1.6" fill="#1a4f82"/><circle cx="16" cy="4" r="2" fill="#e8232b"/></g></svg>
<svg class="a" style="left:32px;top:222px;" width="19" height="19" viewBox="0 0 19 19"><g transform="scale(0.95)"><path d="M4 4 L14 4 Q16 12 8 16 L4 16Z" fill="#d4e8f7" stroke="#2b95dc" stroke-width="1.3" stroke-dasharray="2 1"/><circle cx="4" cy="4" r="2" fill="#e8232b"/><circle cx="4" cy="16" r="1.6" fill="#1a4f82"/><circle cx="15" cy="16" r="1.6" fill="#1a4f82"/></g></svg>
<svg class="a" style="left:6px;top:250px;" width="19" height="19" viewBox="0 0 19 19"><g transform="scale(0.95)"><circle cx="10" cy="10" r="7" fill="#d4e8f7" stroke="#2b95dc" stroke-width="1.5"/><circle cx="10" cy="10" r="1.5" fill="#1a4f82"/><circle cx="15.5" cy="5" r="2" fill="#e8232b"/></g></svg>
<svg class="a" style="left:32px;top:250px;" width="19" height="19" viewBox="0 0 19 19"><g transform="scale(0.95)"><path d="M6 3 L14 3 L18 10 L14 17 L6 17 L2 10Z" fill="#d4e8f7" stroke="#2b95dc" stroke-width="1.4"/><circle cx="10" cy="10" r="1.5" fill="#1a4f82"/><circle cx="14" cy="3.5" r="2" fill="#e8232b"/></g></svg>
<svg class="a" style="left:6px;top:276px;" width="19" height="19" viewBox="0 0 19 19"><g transform="scale(0.95)"><line x1="4" y1="3" x2="4" y2="16" stroke="#2b95dc" stroke-width="1.2" stroke-dasharray="2 1"/><path d="M4 16 C10 16 15 12 15 4" fill="none" stroke="#2b95dc" stroke-width="1.5"/><line x1="4" y1="16" x2="15" y2="4" stroke="#1a4f82" stroke-width="1"/><circle cx="4" cy="3" r="1.6" fill="#1a4f82"/><circle cx="4" cy="16" r="1.6" fill="#1a4f82"/><circle cx="15.5" cy="3.5" r="2" fill="#e8232b"/></g></svg>
<svg class="a" style="left:32px;top:276px;" width="19" height="19" viewBox="0 0 19 19"><g transform="scale(0.95)"><path d="M4 16 C10 16 15 12 15 4" fill="none" stroke="#2b95dc" stroke-width="1.5"/><line x1="4" y1="16" x2="15" y2="4" stroke="#1a4f82" stroke-width="1" stroke-dasharray="2 1"/><circle cx="4" cy="16" r="1.6" fill="#1a4f82"/><circle cx="15.5" cy="3.5" r="2" fill="#e8232b"/><circle cx="4" cy="4" r="1.4" fill="#1a4f82"/></g></svg>
<svg class="a" style="left:6px;top:302px;" width="19" height="19" viewBox="0 0 19 19"><g transform="scale(0.95)"><path d="M3 6 C3 13 8 17 15 17" fill="none" stroke="#2b95dc" stroke-width="1.5"/><line x1="3" y1="6" x2="11" y2="13" stroke="#1a4f82" stroke-width="1"/><circle cx="4" cy="5" r="2" fill="#e8232b"/><circle cx="15" cy="17" r="1.5" fill="#1a4f82"/></g></svg>
<svg class="a" style="left:32px;top:302px;" width="19" height="19" viewBox="0 0 19 19"><g transform="scale(0.95)"><path d="M4 16 L4 4 L16 4" fill="none" stroke="#2b95dc" stroke-width="1.3"/><path d="M4 16 Q14 14 16 4" fill="#d4e8f7" stroke="#2b95dc" stroke-width="1.5"/><circle cx="4" cy="16" r="1.6" fill="#1a4f82"/><circle cx="16" cy="4" r="2" fill="#e8232b"/></g></svg>
<svg class="a" style="left:6px;top:334px;" width="19" height="19" viewBox="0 0 19 19"><g transform="scale(0.95)"><path d="M10 2 L10 18 M2 10 L18 10" stroke="#e8232b" stroke-width="1.6"/><path d="M10 1 L7 5 L13 5Z M10 19 L7 15 L13 15Z M1 10 L5 7 L5 13Z M19 10 L15 7 L15 13Z" fill="#e8232b"/></g></svg>
<svg class="a" style="left:32px;top:334px;" width="19" height="19" viewBox="0 0 19 19"><g transform="scale(0.95)"><path d="M2 12 L10 8 L18 12 L10 16Z" fill="#d4e8f7" stroke="#2b95dc" stroke-width="1.3"/><path d="M2 12 L2 14 L10 18 L18 14 L18 12" fill="none" stroke="#2b95dc" stroke-width="1.3"/><path d="M10 12 L10 5" stroke="#e8232b" stroke-width="2.2"/><path d="M6.5 6 L10 1.5 L13.5 6Z" fill="#e8232b"/></g></svg>
<svg class="a" style="left:6px;top:362px;" width="19" height="19" viewBox="0 0 19 19"><g transform="scale(0.95)"><path d="M4 11 A6 6 0 0 1 14 5" fill="none" stroke="#e8232b" stroke-width="2"/><path d="M16 9 A6 6 0 0 1 6 15" fill="none" stroke="#e8232b" stroke-width="2"/><path d="M12 2 L17 5 L12 8Z M8 12 L3 15 L8 18Z" fill="#e8232b"/></g></svg>
<svg class="a" style="left:32px;top:362px;" width="19" height="19" viewBox="0 0 19 19"><g transform="scale(0.95)"><path d="M3 8 C6 2 14 2 16 6" fill="none" stroke="#1a4f82" stroke-width="1.6"/><path d="M6 12 C8 8 12 8 13 11 C14 14 12 17 9 17" fill="none" stroke="#2b95dc" stroke-width="1.6"/><path d="M10 11 L17 4" stroke="#e8232b" stroke-width="2"/><path d="M13 3 L18 2 L17 7Z" fill="#e8232b"/></g></svg>
<svg class="a" style="left:6px;top:388px;" width="19" height="19" viewBox="0 0 19 19"><g transform="scale(0.95)"><rect x="3" y="3" width="14" height="14" fill="#d4e8f7" stroke="#1a4f82" stroke-width="1.4"/><line x1="3" y1="8" x2="17" y2="8" stroke="#1a4f82" stroke-width="1"/><line x1="8" y1="8" x2="8" y2="17" stroke="#1a4f82" stroke-width="1"/><path d="M9 14 L15 6" stroke="#e8232b" stroke-width="2"/><path d="M12 4 L17 3 L16 8Z" fill="#e8232b"/></g></svg>
<svg class="a" style="left:32px;top:388px;" width="19" height="19" viewBox="0 0 19 19"><g transform="scale(0.95)"><path d="M3 10 A7 7 0 0 1 12 4" fill="none" stroke="#2b95dc" stroke-width="1.5"/><path d="M6 15 A5 5 0 0 1 9 9" fill="none" stroke="#2b95dc" stroke-width="1.5"/><path d="M8 14 L15 6" stroke="#e8232b" stroke-width="2"/><path d="M12 4 L17 3 L16 8Z" fill="#e8232b"/></g></svg>
<svg class="a" style="left:6px;top:414px;" width="19" height="19" viewBox="0 0 19 19"><g transform="scale(0.95)"><path d="M10 10 L3 3" stroke="#e8232b" stroke-width="1.3"/><path d="M10 10 L17 4" stroke="#2ca84a" stroke-width="1.3"/><path d="M10 10 L10 18" stroke="#2b95dc" stroke-width="1.3" stroke-dasharray="2 1"/><path d="M10 10 L17 16" stroke="#e8232b" stroke-width="1.3"/><circle cx="10" cy="10" r="2" fill="#1a4f82"/></g></svg>
<svg class="a" style="left:32px;top:414px;" width="19" height="19" viewBox="0 0 19 19"><g transform="scale(0.95)"><path d="M10 2 L2 17 L18 17Z" fill="none" stroke="#1a4f82" stroke-width="1.3"/><path d="M10 2 L10 17" stroke="#e8232b" stroke-width="1.5"/><path d="M6 9 L14 9 M4 13 L16 13" stroke="#e8232b" stroke-width="1"/></g></svg>
<svg class="a" style="left:6px;top:446px;" width="19" height="19" viewBox="0 0 19 19"><g transform="scale(0.95)"><path d="M4 8 L12 3 L17 9 L9 15Z" fill="#fff" stroke="#1a4f82" stroke-width="1.5"/><circle cx="10.5" cy="9" r="2.4" fill="#e8232b"/><path d="M4 15 L9 16" stroke="#1a4f82" stroke-width="1.3"/></g></svg>
<svg class="a" style="left:32px;top:446px;" width="19" height="19" viewBox="0 0 19 19"><g transform="scale(0.95)"><path d="M4 4 L16 16" stroke="#1a4f82" stroke-width="1.3"/><path d="M2 8 L8 2 M12 18 L18 12" stroke="#1a4f82" stroke-width="1.2"/><circle cx="6" cy="13" r="2" fill="#e8232b"/><circle cx="16" cy="9" r="2" fill="#e8232b"/></g></svg>
<svg class="a" style="left:6px;top:472px;" width="19" height="19" viewBox="0 0 19 19"><g transform="scale(0.95)"><path d="M3 16 A12 12 0 0 1 16 3 L16 9 A6 6 0 0 0 9 16Z" fill="#fff" stroke="#1a4f82" stroke-width="1.5"/><path d="M6 11 L8 12 M9 7 L10 9 M13 5 L13 7" stroke="#1a4f82" stroke-width="1"/></g></svg>
<svg class="a" style="left:32px;top:472px;" width="19" height="19" viewBox="0 0 19 19"><g transform="scale(0.95)"><rect x="6" y="2" width="12" height="11" fill="#fff" stroke="#1a4f82" stroke-width="1.2"/><text x="12" y="10.5" font-size="7" font-family="Liberation Sans" text-anchor="middle" fill="#1a4f82">A1</text><path d="M3 8 L3 17 M1 15 L3 18 L5 15" stroke="#1a4f82" stroke-width="1.2" fill="none"/></g></svg>
<svg class="a" style="left:6px;top:500px;" width="19" height="19" viewBox="0 0 19 19"><g transform="scale(0.95)"><circle cx="10" cy="10" r="6" fill="none" stroke="#1a4f82" stroke-width="1.3"/><path d="M1 10 L19 10" stroke="#1a4f82" stroke-width="1.3"/><path d="M1 10 L4 7 L4 13Z M19 10 L16 7 L16 13Z" fill="#1a4f82"/><text x="10" y="8" font-size="4.5" text-anchor="middle" fill="#1a4f82" font-family="Liberation Sans">C</text><text x="10" y="15" font-size="4" text-anchor="middle" fill="#1a4f82" font-family="Liberation Sans">AB</text></g></svg>
<svg class="a" style="left:32px;top:500px;" width="19" height="19" viewBox="0 0 19 19"><g transform="scale(0.95)"><path d="M4 18 L9 2 L12 2 L17 18 L14 18 L10.5 6 L7 18Z" fill="#2b95dc"/><path d="M6 12 L14 12" stroke="#2b95dc" stroke-width="1.5"/></g></svg>
<svg class="a" style="left:6px;top:532px;" width="19" height="19" viewBox="0 0 19 19"><g transform="scale(0.95)"><ellipse cx="10" cy="10" rx="8" ry="4" fill="none" stroke="#e8232b" stroke-width="2.4" stroke-dasharray="6 2"/><line x1="10" y1="2" x2="10" y2="18" stroke="#1a4f82" stroke-width="1.2"/></g></svg>
<svg class="a" style="left:32px;top:532px;" width="19" height="19" viewBox="0 0 19 19"><g transform="scale(0.95)"><path d="M6 17 L4 10 Q4 8 6 9 L7 11 L7 5 Q8 3 9 5 L9 9 L10 4 Q11 3 12 5 L12 9 L13 6 Q15 6 15 8 L15 13 Q14 17 11 18Z" fill="#f2f4f8" stroke="#1a4f82" stroke-width="1"/><path d="M3 3 L17 3" stroke="#e8232b" stroke-width="1.6"/><path d="M2 3 L5 1 L5 5Z M18 3 L15 1 L15 5Z" fill="#e8232b"/></g></svg>
<svg class="a" style="left:6px;top:558px;" width="19" height="19" viewBox="0 0 19 19"><g transform="scale(0.95)"><circle cx="11" cy="8" r="5.5" fill="none" stroke="#1a4f82" stroke-width="1.6"/><line x1="7" y1="12" x2="2.5" y2="16.5" stroke="#1a4f82" stroke-width="2"/></g></svg>
<svg class="a" style="left:32px;top:558px;" width="19" height="19" viewBox="0 0 19 19"><g transform="scale(0.95)"><rect x="2" y="2" width="16" height="16" fill="#d4e8f7" stroke="#2b95dc" stroke-width="1" stroke-dasharray="2 1"/><circle cx="11" cy="8" r="4.5" fill="none" stroke="#1a4f82" stroke-width="1.5"/><line x1="8" y1="11" x2="4" y2="15" stroke="#1a4f82" stroke-width="1.8"/></g></svg>
<svg class="a" style="left:6px;top:584px;" width="19" height="19" viewBox="0 0 19 19"><g transform="scale(0.95)"><circle cx="10" cy="10" r="4" fill="none" stroke="#1a4f82" stroke-width="1.5"/><line x1="7" y1="13" x2="3" y2="17" stroke="#1a4f82" stroke-width="1.8"/><path d="M2 2 L6 2 L2 6Z M18 2 L14 2 L18 6Z M18 18 L14 18 L18 14Z" fill="#e8232b"/><path d="M3 3 L6 6 M17 3 L14 6 M17 17 L14 14" stroke="#e8232b" stroke-width="1.3"/></g></svg>
<svg class="a" style="left:32px;top:584px;" width="19" height="19" viewBox="0 0 19 19"><g transform="scale(0.95)"><path d="M3 6 L7 6 L8 4 L14 4 L14 12 L3 12Z" fill="#fff" stroke="#1a4f82" stroke-width="1.3"/><path d="M12 16 A4 4 0 1 0 16 11" fill="none" stroke="#e8232b" stroke-width="1.6"/></g></svg>
<svg class="a" style="left:6px;top:618px;" width="19" height="19" viewBox="0 0 19 19"><g transform="scale(0.95)"><rect x="5" y="3" width="10" height="8" rx="1" fill="#fff" stroke="#1a4f82" stroke-width="1.3"/><circle cx="10" cy="7" r="2" fill="#e8232b"/><path d="M6 11 L3 19 M14 11 L17 19 M10 11 L10 19" stroke="#1a4f82" stroke-width="1.2"/></g></svg>
<svg class="a" style="left:32px;top:618px;" width="19" height="19" viewBox="0 0 19 19"><g transform="scale(0.95)"><circle cx="11" cy="3" r="1.8" fill="#888"/><path d="M11 5 L9 11 L6 18 M9 11 L12 18 M10 7 L13 10 M10 7 L7 10" stroke="#777" stroke-width="1.6" fill="none"/><line x1="14" y1="6" x2="16" y2="19" stroke="#999" stroke-width="1"/></g></svg>
<svg class="a" style="left:6px;top:644px;" width="19" height="19" viewBox="0 0 19 19"><g transform="scale(0.95)"><path d="M2 10 Q10 2 18 10 Q10 18 2 10Z" fill="#fff" stroke="#1a4f82" stroke-width="1.6"/><circle cx="10.5" cy="10.5" r="4" fill="#2b95dc"/><circle cx="10.5" cy="10.5" r="1.8" fill="#1a4f82"/><path d="M2 8 L5 4 M4 8 L7 4" stroke="#1a4f82" stroke-width="1.2"/></g></svg>
<svg class="a" style="left:32px;top:644px;" width="19" height="19" viewBox="0 0 19 19"><g transform="scale(0.95)"><path d="M18 3 L3 10 L18 17" fill="none" stroke="#888" stroke-width="1.2"/><ellipse cx="13" cy="10" rx="2.5" ry="5" fill="none" stroke="#888" stroke-width="1.2"/><path d="M17 4 Q20 10 17 16" fill="none" stroke="#aaa" stroke-dasharray="1.5 1.5"/></g></svg>
<svg class="a" style="left:6px;top:676px;" width="19" height="19" viewBox="0 0 19 19"><g transform="scale(0.95)"><path d="M10 1.5 L17.5 5.5 L17.5 14 L10 18 L2.5 14 L2.5 5.5Z" fill="none" stroke="#1a4f82" stroke-width="1.8"/><path d="M10 5 L14 7.5 L14 12 L10 14.5 L6 12 L6 7.5Z" fill="none" stroke="#1a4f82" stroke-width="1.3"/><path d="M14 12 L14 18 M11.5 15.5 L14 18.5 L16.5 15.5" stroke="#1a4f82" stroke-width="1.5" fill="#fff"/></g></svg>
<svg class="a" style="left:32px;top:676px;" width="19" height="19" viewBox="0 0 19 19"><g transform="scale(0.95)"><path d="M2 3 L10 9 L18 3 M2 9 L10 15 L18 9 M2 17 L10 11 L18 17" fill="none" stroke="#1a4f82" stroke-width="2.5"/></g></svg>
<svg class="a" style="left:6px;top:702px;" width="19" height="19" viewBox="0 0 19 19"><g transform="scale(0.95)"><path d="M3 7 L10 3 L17 7 L10 11Z" fill="#d4e8f7" stroke="#1a4f82" stroke-width="1.4"/><path d="M3 10 L10 14 L14 12 M3 13 L10 17 L12 16" fill="none" stroke="#1a4f82" stroke-width="1.4"/><path d="M12 12 L16 12 L16 10 L19 14 L16 18 L16 16 L12 16Z" fill="#fff" stroke="#1a4f82" stroke-width="1.2"/></g></svg>
<svg class="a" style="left:32px;top:702px;" width="19" height="19" viewBox="0 0 19 19"><g transform="scale(0.95)"><path d="M2 3 L10 9 L18 3 M2 9 L10 15 L14 12 M2 17 L10 11" fill="none" stroke="#1a4f82" stroke-width="2.4"/><circle cx="15" cy="15" r="3.2" fill="#fff" stroke="#2b95dc" stroke-width="1.6"/></g></svg>
<div class="a" style="left:6px;top:190px;width:44px;height:2px;background:#8c8c92;"></div>
<div class="a" style="left:6px;top:328px;width:44px;height:2px;background:#8c8c92;"></div>
<div class="a" style="left:6px;top:440px;width:44px;height:2px;background:#8c8c92;"></div>
<div class="a" style="left:6px;top:525px;width:44px;height:2px;background:#8c8c92;"></div>
<div class="a" style="left:6px;top:610px;width:44px;height:2px;background:#8c8c92;"></div>
<div class="a" style="left:6px;top:669px;width:44px;height:2px;background:#8c8c92;"></div>
<div class="a" style="left:58px;top:99px;width:1080px;height:25px;background:#f2f2f6;"></div>
<div class="a" style="left:58px;top:98px;width:2px;height:26px;background:#111;"></div>
<svg class="a" style="left:76px;top:103px;" width="18" height="18" viewBox="0 0 18 18"><circle cx="11" cy="7" r="4.6" fill="none" stroke="#111" stroke-width="1.8"/><line x1="7.6" y1="10.4" x2="2.5" y2="15.5" stroke="#111" stroke-width="2.2"/></svg>
<div class="a" style="left:111px;top:104px;width:27px;height:20px;background:#e2e2ea;border:1px solid #7a7a86;border-bottom:none;border-radius:2px 2px 0 0;"></div>
<div class="t" style="left:120.69px;top:108.69px;font-size:11px;line-height:11px;color:#555;transform:scaleX(0.9200);transform-origin:0 0;">1</div>
<div class="a" style="left:137px;top:104px;width:27px;height:20px;background:#e2e2ea;border:1px solid #7a7a86;border-bottom:none;border-radius:2px 2px 0 0;"></div>
<div class="t" style="left:146.69px;top:108.69px;font-size:11px;line-height:11px;color:#555;transform:scaleX(0.9200);transform-origin:0 0;">2</div>
<div class="a" style="left:163px;top:104px;width:27px;height:20px;background:#e2e2ea;border:1px solid #7a7a86;border-bottom:none;border-radius:2px 2px 0 0;"></div>
<div class="t" style="left:172.69px;top:108.69px;font-size:11px;line-height:11px;color:#555;transform:scaleX(0.9200);transform-origin:0 0;">3</div>
<div class="a" style="left:189px;top:104px;width:27px;height:20px;background:#e2e2ea;border:1px solid #7a7a86;border-bottom:none;border-radius:2px 2px 0 0;"></div>
<div class="t" style="left:198.69px;top:108.69px;font-size:11px;line-height:11px;color:#555;transform:scaleX(0.9200);transform-origin:0 0;">4</div>
<div class="a" style="left:215px;top:104px;width:31px;height:20px;background:#e2e2ea;border:1px solid #7a7a86;border-bottom:none;border-radius:2px 2px 0 0;"></div>
<div class="t" style="left:223.87px;top:108.69px;font-size:11px;line-height:11px;color:#555;transform:scaleX(0.9200);transform-origin:0 0;">4b</div>
<div class="a" style="left:245px;top:104px;width:28px;height:20px;background:#e2e2ea;border:1px solid #7a7a86;border-bottom:none;border-radius:2px 2px 0 0;"></div>
<div class="t" style="left:255.19px;top:108.69px;font-size:11px;line-height:11px;color:#555;transform:scaleX(0.9200);transform-origin:0 0;">5</div>
<div class="a" style="left:272px;top:104px;width:34px;height:20px;background:#e2e2ea;border:1px solid #7a7a86;border-bottom:none;border-radius:2px 2px 0 0;"></div>
<div class="t" style="left:280.97px;top:108.69px;font-size:11px;line-height:11px;color:#555;transform:scaleX(0.9200);transform-origin:0 0;">6.0</div>
<div class="a" style="left:305px;top:104px;width:34px;height:20px;background:#e2e2ea;border:1px solid #7a7a86;border-bottom:none;border-radius:2px 2px 0 0;"></div>
<div class="t" style="left:313.97px;top:108.69px;font-size:11px;line-height:11px;color:#555;transform:scaleX(0.9200);transform-origin:0 0;">6.2</div>
<div class="a" style="left:338px;top:104px;width:34px;height:20px;background:#e2e2ea;border:1px solid #7a7a86;border-bottom:none;border-radius:2px 2px 0 0;"></div>
<div class="t" style="left:346.97px;top:108.69px;font-size:11px;line-height:11px;color:#555;transform:scaleX(0.9200);transform-origin:0 0;">6.1</div>
<div class="a" style="left:371px;top:104px;width:33px;height:20px;background:#e2e2ea;border:1px solid #7a7a86;border-bottom:none;border-radius:2px 2px 0 0;"></div>
<div class="t" style="left:380.87px;top:108.69px;font-size:11px;line-height:11px;color:#555;transform:scaleX(0.9200);transform-origin:0 0;">6b</div>
<div class="a" style="left:403px;top:104px;width:27px;height:20px;background:#e2e2ea;border:1px solid #7a7a86;border-bottom:none;border-radius:2px 2px 0 0;"></div>
<div class="t" style="left:412.69px;top:108.69px;font-size:11px;line-height:11px;color:#555;transform:scaleX(0.9200);transform-origin:0 0;">7</div>
<div class="a" style="left:429px;top:104px;width:27px;height:20px;background:#e2e2ea;border:1px solid #7a7a86;border-bottom:none;border-radius:2px 2px 0 0;"></div>
<div class="t" style="left:438.69px;top:108.69px;font-size:11px;line-height:11px;color:#555;transform:scaleX(0.9200);transform-origin:0 0;">8</div>
<div class="a" style="left:455px;top:104px;width:26px;height:20px;background:#e2e2ea;border:1px solid #7a7a86;border-bottom:none;border-radius:2px 2px 0 0;"></div>
<div class="t" style="left:464.47px;top:108.69px;font-size:11px;line-height:11px;color:#555;transform:scaleX(0.9200);transform-origin:0 0;">c</div>
<div class="a" style="left:480px;top:104px;width:55px;height:20px;background:#e2e2ea;border:1px solid #7a7a86;border-bottom:none;border-radius:2px 2px 0 0;"></div>
<div class="t" style="left:487.93px;top:108.69px;font-size:11px;line-height:11px;color:#555;transform:scaleX(0.9200);transform-origin:0 0;">Scène 5</div>
<div class="a" style="left:534px;top:104px;width:54px;height:20px;background:#e2e2ea;border:1px solid #7a7a86;border-bottom:none;border-radius:2px 2px 0 0;"></div>
<div class="t" style="left:541.43px;top:108.69px;font-size:11px;line-height:11px;color:#555;transform:scaleX(0.9200);transform-origin:0 0;">Scène 6</div>
<div class="a" style="left:587px;top:104px;width:35px;height:20px;background:#e2e2ea;border:1px solid #7a7a86;border-bottom:none;border-radius:2px 2px 0 0;"></div>
<div class="t" style="left:596.47px;top:108.69px;font-size:11px;line-height:11px;color:#555;transform:scaleX(0.9200);transform-origin:0 0;">cr1</div>
<div class="a" style="left:621px;top:104px;width:36px;height:20px;background:#e2e2ea;border:1px solid #7a7a86;border-bottom:none;border-radius:2px 2px 0 0;"></div>
<div class="t" style="left:630.97px;top:108.69px;font-size:11px;line-height:11px;color:#555;transform:scaleX(0.9200);transform-origin:0 0;">cr2</div>
<div class="a" style="left:656px;top:104px;width:35px;height:20px;background:#e2e2ea;border:1px solid #7a7a86;border-bottom:none;border-radius:2px 2px 0 0;"></div>
<div class="t" style="left:665.47px;top:108.69px;font-size:11px;line-height:11px;color:#555;transform:scaleX(0.9200);transform-origin:0 0;">cr3</div>
<div class="a" style="left:690px;top:104px;width:35px;height:20px;background:#e2e2ea;border:1px solid #7a7a86;border-bottom:none;border-radius:2px 2px 0 0;"></div>
<div class="t" style="left:699.47px;top:108.69px;font-size:11px;line-height:11px;color:#555;transform:scaleX(0.9200);transform-origin:0 0;">cr4</div>
<div class="a" style="left:724px;top:102px;width:34px;height:23px;background:#ffffff;border:1px solid #8a8a96;border-bottom:none;border-radius:3px 3px 0 0;"></div>
<div class="t" style="left:733.97px;top:107.69px;font-size:11px;line-height:11px;color:#555;transform:scaleX(0.9200);transform-origin:0 0;">cr5</div>
<svg class="a" style="left:0;top:0" width="1600" height="902" viewBox="0 0 1600 902"><defs><clipPath id="cc"><rect x="58" y="124" width="1080" height="689"/></clipPath></defs><g clip-path="url(#cc)"><rect x="58" y="124" width="1080.00" height="689.00" fill="#fff" stroke="none" stroke-width="1" /><text x="0" y="0" transform="translate(60 133) scale(0.8331 1)" font-size="9" font-family="Liberation Sans" fill="#666" stroke="none" stroke-width="0">Dessus</text><rect x="416.5" y="198.5" width="444.00" height="582.00" fill="#fff" stroke="#a0a0a0" stroke-width="1" /><path d="M425.5 199V780M444.5 199V780M463.5 199V780M481.5 199V780M500.5 199V780M519.5 199V780M538.5 199V780M556.5 199V780M575.5 199V780M594.5 199V780M613.5 199V780M631.5 199V780M650.5 199V780M669.5 199V780M688.5 199V780M706.5 199V780M725.5 199V780M744.5 199V780M763.5 199V780M781.5 199V780M800.5 199V780M819.5 199V780M838.5 199V780M856.5 199V780M417 209.5H860M417 228.5H860M417 246.5H860M417 265.5H860M417 284.5H860M417 303.5H860M417 321.5H860M417 340.5H860M417 359.5H860M417 378.5H860M417 396.5H860M417 415.5H860M417 434.5H860M417 453.5H860M417 471.5H860M417 490.5H860M417 509.5H860M417 528.5H860M417 546.5H860M417 565.5H860M417 584.5H860M417 603.5H860M417 621.5H860M417 640.5H860M417 659.5H860M417 678.5H860M417 696.5H860M417 715.5H860M417 734.5H860M417 753.5H860M417 771.5H860" fill="none" stroke="#e8e8e8" stroke-width="1" /><line x1="416" y1="206.5" x2="861" y2="206.5" stroke="#b0b0b0" stroke-width="1" /><rect x="470" y="199" width="50.00" height="6.00" fill="#fff" stroke="#aaa" stroke-width="0.8" /><rect x="521" y="199" width="6.00" height="6.00" fill="#fff" stroke="#aaa" stroke-width="0.8" /><rect x="528" y="199" width="29.00" height="6.00" fill="#e8e8e8" stroke="none" stroke-width="1" /><text x="0" y="0" transform="translate(457.5 497) scale(0.9515 1)" font-size="12.5" font-family="Liberation Sans" fill="#2e2e2e" stroke="#2e2e2e" stroke-width="0.3">1347,0 mm</text><circle cx="467" cy="702" r="47" fill="none" stroke="#666" stroke-width="1"/><rect x="449" y="344" width="51.00" height="98.00" fill="#efeee9" stroke="#9a9a9a" stroke-width="1" /><rect x="452" y="347" width="45.00" height="25.00" fill="none" stroke="#aaa" stroke-width="0.8" stroke-dasharray="3 2"/><rect x="452" y="377" width="45.00" height="62.00" fill="none" stroke="#aaa" stroke-width="0.8" stroke-dasharray="3 2"/><line x1="449" y1="375.5" x2="500" y2="375.5" stroke="#999" stroke-width="1" /><rect x="467" y="538" width="51.50" height="108.00" fill="#efeee9" stroke="#9a9a9a" stroke-width="1" /><rect x="470" y="541" width="45.00" height="71.00" fill="none" stroke="#aaa" stroke-width="0.8" stroke-dasharray="3 2"/><line x1="467" y1="614.5" x2="518" y2="614.5" stroke="#999" stroke-width="1" /><rect x="467" y="699" width="133.00" height="70.00" fill="#efeee9" stroke="#999" stroke-width="1" /><rect x="467" y="699" width="133.00" height="5.00" fill="#d8d8d8" stroke="#999" stroke-width="0.8" /><line x1="533.5" y1="699" x2="533.5" y2="769" stroke="#888" stroke-width="1.5" /><rect x="470" y="705" width="61.00" height="61.00" fill="none" stroke="#aaa" stroke-width="0.8" stroke-dasharray="3 2"/><line x1="475.5" y1="705" x2="475.5" y2="766" stroke="#aaa" stroke-width="0.8" /><line x1="526.5" y1="705" x2="526.5" y2="766" stroke="#aaa" stroke-width="0.8" /><rect x="536" y="705" width="61.00" height="61.00" fill="none" stroke="#aaa" stroke-width="0.8" stroke-dasharray="3 2"/><line x1="541.5" y1="705" x2="541.5" y2="766" stroke="#aaa" stroke-width="0.8" /><line x1="592.5" y1="705" x2="592.5" y2="766" stroke="#aaa" stroke-width="0.8" /><path d="M441.3 699V780M433 699H441.3" fill="none" stroke="#777" stroke-width="1" /><path d="M467 655A47 47 0 0 1 514 702A47 47 0 0 1 467 749" fill="none" stroke="#999" stroke-width="0.8" stroke-dasharray="3 2"/><rect x="584" y="227.5" width="54.00" height="61.00" fill="#eeeeee" stroke="#999" stroke-width="1.2" /><rect x="646" y="213.5" width="58.00" height="286.50" fill="#eeeeee" stroke="#999" stroke-width="1" /><line x1="646" y1="285.5" x2="703" y2="285.5" stroke="#aaa" stroke-width="0.8" stroke-dasharray="3 2"/><line x1="700.5" y1="290" x2="700.5" y2="500" stroke="#999" stroke-width="0.8" /><circle cx="698" cy="300" r="2.5" fill="none" stroke="#888" stroke-width="0.8"/><circle cx="692" cy="313" r="2.5" fill="none" stroke="#888" stroke-width="0.8"/><circle cx="698" cy="386" r="2.5" fill="none" stroke="#888" stroke-width="0.8"/><circle cx="692" cy="462" r="2.5" fill="none" stroke="#888" stroke-width="0.8"/><circle cx="698" cy="477" r="2.5" fill="none" stroke="#888" stroke-width="0.8"/><rect x="586" y="295.7" width="40.50" height="228.90" fill="#eeeeee" stroke="#999" stroke-width="1" /><line x1="587" y1="295.7" x2="587" y2="524" stroke="#b4b4b4" stroke-width="3" /><path d="M590 304H626M590 330H626M590 333H626" fill="none" stroke="#999" stroke-width="0.8" stroke-dasharray="3 2"/><path d="M590 452H626M590 466H626M590 479H626" fill="none" stroke="#999" stroke-width="0.8" stroke-dasharray="3 2"/><circle cx="591" cy="344" r="2.5" fill="none" stroke="#888" stroke-width="0.8"/><circle cx="591" cy="434" r="2.5" fill="none" stroke="#888" stroke-width="0.8"/><rect x="585.6" y="488" width="118.00" height="36.60" fill="#eeeeee" stroke="#999" stroke-width="1" /><rect x="588" y="491" width="113.00" height="31.00" fill="none" stroke="#aaa" stroke-width="0.8" stroke-dasharray="3 2"/><rect x="627" y="490" width="35.00" height="8.00" fill="none" stroke="#888" stroke-width="0.8" /><line x1="629" y1="495.5" x2="660" y2="495.5" stroke="#7a1a1a" stroke-width="1.2" /><rect x="626.5" y="295.7" width="35.90" height="204.30" fill="#b0b0b0" stroke="#8a8a8a" stroke-width="1" /><circle cx="634.5" cy="310" r="5" fill="#ececec"/><circle cx="654.5" cy="310" r="5" fill="#ececec"/><path d="M628 316L661 316" stroke="#8a8a8a" stroke-width="0.7"/><circle cx="634.5" cy="322" r="5" fill="#ececec"/><circle cx="654.5" cy="322" r="5" fill="#ececec"/><path d="M628 328L661 328" stroke="#8a8a8a" stroke-width="0.7"/><circle cx="634.5" cy="334" r="5" fill="#ececec"/><circle cx="654.5" cy="334" r="5" fill="#ececec"/><path d="M628 340L661 340" stroke="#8a8a8a" stroke-width="0.7"/><circle cx="634.5" cy="346" r="5" fill="#ececec"/><circle cx="654.5" cy="346" r="5" fill="#ececec"/><path d="M628 352L661 352" stroke="#8a8a8a" stroke-width="0.7"/><circle cx="634.5" cy="358" r="5" fill="#ececec"/><circle cx="654.5" cy="358" r="5" fill="#ececec"/><path d="M628 364L661 364" stroke="#8a8a8a" stroke-width="0.7"/><circle cx="634.5" cy="370" r="5" fill="#ececec"/><circle cx="654.5" cy="370" r="5" fill="#ececec"/><path d="M628 376L661 376" stroke="#8a8a8a" stroke-width="0.7"/><circle cx="634.5" cy="382" r="5" fill="#ececec"/><circle cx="654.5" cy="382" r="5" fill="#ececec"/><path d="M628 388L661 388" stroke="#8a8a8a" stroke-width="0.7"/><circle cx="634.5" cy="394" r="5" fill="#ececec"/><circle cx="654.5" cy="394" r="5" fill="#ececec"/><path d="M628 400L661 400" stroke="#8a8a8a" stroke-width="0.7"/><circle cx="634.5" cy="406" r="5" fill="#ececec"/><circle cx="654.5" cy="406" r="5" fill="#ececec"/><path d="M628 412L661 412" stroke="#8a8a8a" stroke-width="0.7"/><circle cx="634.5" cy="418" r="5" fill="#ececec"/><circle cx="654.5" cy="418" r="5" fill="#ececec"/><path d="M628 424L661 424" stroke="#8a8a8a" stroke-width="0.7"/><circle cx="634.5" cy="430" r="5" fill="#ececec"/><circle cx="654.5" cy="430" r="5" fill="#ececec"/><path d="M628 436L661 436" stroke="#8a8a8a" stroke-width="0.7"/><circle cx="634.5" cy="442" r="5" fill="#ececec"/><circle cx="654.5" cy="442" r="5" fill="#ececec"/><path d="M628 448L661 448" stroke="#8a8a8a" stroke-width="0.7"/><circle cx="634.5" cy="454" r="5" fill="#ececec"/><circle cx="654.5" cy="454" r="5" fill="#ececec"/><path d="M628 460L661 460" stroke="#8a8a8a" stroke-width="0.7"/><circle cx="634.5" cy="466" r="5" fill="#ececec"/><circle cx="654.5" cy="466" r="5" fill="#ececec"/><path d="M628 472L661 472" stroke="#8a8a8a" stroke-width="0.7"/><circle cx="634.5" cy="478" r="5" fill="#ececec"/><circle cx="654.5" cy="478" r="5" fill="#ececec"/><path d="M628 484L661 484" stroke="#8a8a8a" stroke-width="0.7"/><circle cx="634.5" cy="490" r="5" fill="#ececec"/><circle cx="654.5" cy="490" r="5" fill="#ececec"/><path d="M628 496L661 496" stroke="#8a8a8a" stroke-width="0.7"/><path d="M642.5 296V500M647 296V500" fill="none" stroke="#dcdcdc" stroke-width="1.2" /><path d="M628 296V500M661 296V500" fill="none" stroke="#858585" stroke-width="1.2" /><rect x="626.5" y="295.7" width="35.90" height="8.30" fill="#f84a10" stroke="none" stroke-width="1" /><line x1="628" y1="299.5" x2="661" y2="299.5" stroke="#d05a3a" stroke-width="1" stroke-dasharray="4 2"/><rect x="626.5" y="389" width="35.90" height="8.00" fill="#f84a10" stroke="none" stroke-width="1" /><line x1="628" y1="393.5" x2="661" y2="393.5" stroke="#d05a3a" stroke-width="1" stroke-dasharray="4 2"/><rect x="626.5" y="481" width="35.90" height="8.70" fill="#f84a10" stroke="none" stroke-width="1" /><line x1="628" y1="485.5" x2="661" y2="485.5" stroke="#d05a3a" stroke-width="1" stroke-dasharray="4 2"/><rect x="790" y="213.5" width="63.50" height="252.10" fill="#eeeeee" stroke="#999" stroke-width="1" /><path d="M797 466V260Q797 256 801 256H853" fill="none" stroke="#aaa" stroke-width="0.8" stroke-dasharray="3 2"/><path d="M793 466V262" fill="none" stroke="#aaa" stroke-width="0.8" stroke-dasharray="3 2"/><rect x="794" y="466" width="41.00" height="32.00" fill="#efeee9" stroke="#999" stroke-width="1" /><rect x="835" y="466" width="18.00" height="31.00" fill="#f4f4f4" stroke="#999" stroke-width="1" /><rect x="778.5" y="498.75" width="75.00" height="270.75" fill="#eeeeee" stroke="#999" stroke-width="1" /><rect x="706" y="215" width="82.00" height="43.00" fill="#e8e8e8" stroke="#999" stroke-width="0.8" /><rect x="710" y="217" width="29.00" height="39.00" fill="#666" stroke="#888" stroke-width="1" /><rect x="711" y="250" width="27.00" height="4.00" fill="#333" stroke="none" stroke-width="1" /><rect x="741" y="217" width="42.50" height="39.00" fill="#efeee9" stroke="#999" stroke-width="0.8" /><rect x="744" y="220" width="37.00" height="33.00" fill="none" stroke="#aaa" stroke-width="0.7" stroke-dasharray="2 2"/><circle cx="769" cy="236.5" r="8.5" fill="none" stroke="#666" stroke-width="1.8"/><circle cx="764.5" cy="241.5" r="8.5" fill="none" stroke="#666" stroke-width="1.8"/><path d="M764 256L760 262M767 256L768 265" fill="none" stroke="#222" stroke-width="2" /><rect x="668" y="610.6" width="44.60" height="29.40" fill="#eeeeee" stroke="#999" stroke-width="1" /><rect x="634" y="634" width="16.00" height="6.00" fill="#a08868" stroke="none" stroke-width="1" /><rect x="636" y="626" width="12.00" height="8.00" fill="#fff" stroke="#999" stroke-width="0.8" /><line x1="642.5" y1="626" x2="642.5" y2="634" stroke="#999" stroke-width="0.8" /><rect x="416" y="206" width="445.00" height="7.50" fill="#686868" stroke="none" stroke-width="1" /><rect x="416" y="206" width="7.50" height="111.00" fill="#686868" stroke="none" stroke-width="1" /><rect x="576" y="206" width="14.00" height="21.60" fill="#686868" stroke="none" stroke-width="1" /><rect x="416" y="317" width="49.00" height="26.00" fill="#686868" stroke="none" stroke-width="1" /><rect x="466" y="295.6" width="30.00" height="326.40" fill="#686868" stroke="none" stroke-width="1" /><rect x="406" y="413.75" width="42.50" height="31.85" fill="#686868" stroke="none" stroke-width="1" /><rect x="459" y="538.6" width="8.00" height="242.15" fill="#686868" stroke="none" stroke-width="1" /><rect x="459" y="773" width="136.00" height="7.75" fill="#686868" stroke="none" stroke-width="1" /><rect x="853.5" y="206" width="7.50" height="563.50" fill="#686868" stroke="none" stroke-width="1" /><rect x="638" y="213" width="4.00" height="82.00" fill="#686868" stroke="none" stroke-width="1" /><rect x="632.5" y="640" width="80.00" height="7.80" fill="#686868" stroke="none" stroke-width="1" /><rect x="632.5" y="640" width="7.50" height="133.00" fill="#686868" stroke="none" stroke-width="1" /><rect x="705" y="640" width="7.50" height="133.00" fill="#686868" stroke="none" stroke-width="1" /><rect x="632.5" y="765.5" width="80.00" height="7.50" fill="#686868" stroke="none" stroke-width="1" /><path d="M416 206H454V227.5H441.5V240.8H416Z" fill="#686868" stroke="none" stroke-width="1" /><rect x="469" y="541" width="24.00" height="71.00" fill="none" stroke="#888" stroke-width="0.8" stroke-dasharray="3 2"/><line x1="466" y1="425.5" x2="496" y2="425.5" stroke="#777" stroke-width="0.8" stroke-dasharray="3 2"/><path d="M563 366Q563 358 570 356Q578 352 586 353L596 356L612 358L621 357L626 362L618 366L600 365.5L590 365Q591 378 590 388L575 389Q565 388 563 380Z" fill="#aeb2c8" stroke="#90949e" stroke-width="0.5" /><path d="M565 380Q572 388 588 386L590 388L575 389Q566 388 565 380Z" fill="#8a8ea8" stroke="none" stroke-width="1" /><ellipse cx="581" cy="368" rx="9" ry="7.5" fill="#c6b8b0"/><ellipse cx="567" cy="368" rx="3.2" ry="4.5" fill="#94704e"/><path d="M612 358L620 356L626 361L620 366L611 365Z" fill="#dcdce4" stroke="none" stroke-width="1" /><path d="M580 381L588 378L590 384L583 386Z" fill="#d8d0d4" stroke="none" stroke-width="1" /><line x1="423.5" y1="124" x2="423.5" y2="198" stroke="#22bb22" stroke-width="1" /><line x1="423.5" y1="343" x2="423.5" y2="773" stroke="#22bb22" stroke-width="1" /><line x1="423.5" y1="781" x2="423.5" y2="813" stroke="#22bb22" stroke-width="1" stroke-dasharray="1 2"/><line x1="58" y1="773.5" x2="423" y2="773.5" stroke="#d03030" stroke-width="1" stroke-dasharray="1 2"/><line x1="423" y1="773.5" x2="459" y2="773.5" stroke="#c82020" stroke-width="1" /><line x1="595" y1="773.5" x2="632.5" y2="773.5" stroke="#c82020" stroke-width="1" /><line x1="712.5" y1="773.5" x2="1138" y2="773.5" stroke="#c82020" stroke-width="1" /><text x="0" y="0" transform="translate(62 234) scale(0.9740 1)" font-size="13.5" font-family="Liberation Sans" fill="#4a4a4a" stroke="none" stroke-width="0">101 Bd de la République, 92420 Vaucresson</text><line x1="330" y1="228" x2="416" y2="239" stroke="#444" stroke-width="1" /><line x1="645.5" y1="145" x2="645.5" y2="213" stroke="#707070" stroke-width="1" /><line x1="854.5" y1="145" x2="854.5" y2="206" stroke="#707070" stroke-width="1" /><line x1="645.5" y1="150.5" x2="714.4" y2="150.5" stroke="#707070" stroke-width="1" /><line x1="785.5" y1="150.5" x2="854" y2="150.5" stroke="#707070" stroke-width="1" /><line x1="640.5" y1="155.4" x2="650.5" y2="145.4" stroke="#222" stroke-width="1.7" /><line x1="849" y1="155.4" x2="859" y2="145.4" stroke="#222" stroke-width="1.7" /><text x="0" y="0" transform="translate(717.8 155.5) scale(1.0107 1)" font-size="12.5" font-family="Liberation Sans" fill="#2e2e2e" stroke="#2e2e2e" stroke-width="0.3">2822,0 mm</text><line x1="704.5" y1="172" x2="704.5" y2="206" stroke="#707070" stroke-width="1" /><line x1="790.5" y1="172" x2="790.5" y2="213" stroke="#707070" stroke-width="1" /><line x1="704" y1="177.5" x2="710" y2="177.5" stroke="#707070" stroke-width="1" /><line x1="779.5" y1="177.5" x2="790" y2="177.5" stroke="#707070" stroke-width="1" /><line x1="699" y1="182.8" x2="709" y2="172.8" stroke="#222" stroke-width="1.7" /><line x1="785.7" y1="182.8" x2="795.7" y2="172.8" stroke="#222" stroke-width="1.7" /><line x1="849" y1="182.8" x2="859" y2="172.8" stroke="#222" stroke-width="1.7" /><text x="0" y="0" transform="translate(717.8 183) scale(0.9367 1)" font-size="12.5" font-family="Liberation Sans" fill="#2e2e2e" stroke="#2e2e2e" stroke-width="0.3">1165,2 mm</text><text x="0" y="0" transform="translate(793 183) scale(1.0436 1)" font-size="12.5" font-family="Liberation Sans" fill="#2e2e2e" stroke="#2e2e2e" stroke-width="0.3">860,0 mm</text><line x1="692.5" y1="214" x2="692.5" y2="230" stroke="#707070" stroke-width="1" /><line x1="692.5" y1="246" x2="692.5" y2="258" stroke="#707070" stroke-width="1" /><line x1="692" y1="258.5" x2="705" y2="258.5" stroke="#707070" stroke-width="1" /><path d="M688 219L692 214L692 224" fill="none" stroke="#222" stroke-width="1.5" /><line x1="687" y1="253" x2="697" y2="263" stroke="#222" stroke-width="1.7" /><path d="M701 262L705 258L706 263" fill="none" stroke="#222" stroke-width="1.5" /><text x="0" y="0" transform="translate(663 241) scale(1.0185 1)" font-size="12.5" font-family="Liberation Sans" fill="#2e2e2e" stroke="#2e2e2e" stroke-width="0.3">600,0 m</text><line x1="861" y1="213.5" x2="918" y2="213.5" stroke="#707070" stroke-width="1" /><line x1="861" y1="498.5" x2="918" y2="498.5" stroke="#707070" stroke-width="1" /><line x1="861" y1="769.5" x2="918" y2="769.5" stroke="#707070" stroke-width="1" /><line x1="912.5" y1="213.3" x2="912.5" y2="349" stroke="#707070" stroke-width="1" /><line x1="912.5" y1="366" x2="912.5" y2="628" stroke="#707070" stroke-width="1" /><line x1="912.5" y1="645" x2="912.5" y2="769.5" stroke="#707070" stroke-width="1" /><line x1="907.5" y1="208.3" x2="917.5" y2="218.3" stroke="#222" stroke-width="1.7" /><line x1="907.5" y1="503" x2="917.5" y2="493" stroke="#222" stroke-width="1.7" /><line x1="907.5" y1="493" x2="917.5" y2="503" stroke="#222" stroke-width="1.7" /><line x1="907.5" y1="774.5" x2="917.5" y2="764.5" stroke="#222" stroke-width="1.7" /><text x="0" y="0" transform="translate(879 362) scale(1.0395 1)" font-size="12.5" font-family="Liberation Sans" fill="#2e2e2e" stroke="#2e2e2e" stroke-width="0.3">3870,0 mm</text><text x="0" y="0" transform="translate(880 641) scale(1.0235 1)" font-size="12.5" font-family="Liberation Sans" fill="#2e2e2e" stroke="#2e2e2e" stroke-width="0.3">3674,6 mm</text><line x1="441" y1="295.5" x2="586" y2="295.5" stroke="#707070" stroke-width="1" /><line x1="717.5" y1="257" x2="717.5" y2="344" stroke="#707070" stroke-width="1" /><line x1="717.5" y1="361" x2="717.5" y2="487.4" stroke="#707070" stroke-width="1" /><line x1="712.4" y1="492.4" x2="722.4" y2="482.4" stroke="#222" stroke-width="1.7" /><line x1="712.4" y1="482.4" x2="722.4" y2="492.4" stroke="#222" stroke-width="1.7" /><text x="0" y="0" transform="translate(686 357) scale(0.9595 1)" font-size="12.5" font-family="Liberation Sans" fill="#2e2e2e" stroke="#2e2e2e" stroke-width="0.3">3717,6 mm</text><line x1="449.5" y1="280" x2="449.5" y2="317" stroke="#707070" stroke-width="1" /><line x1="500.5" y1="280" x2="500.5" y2="295" stroke="#707070" stroke-width="1" /><line x1="444" y1="286" x2="454" y2="276" stroke="#222" stroke-width="1.7" /><line x1="495" y1="286" x2="505" y2="276" stroke="#222" stroke-width="1.7" /><text x="0" y="0" transform="translate(444 286) scale(1.0616 1)" font-size="12.5" font-family="Liberation Sans" fill="#2e2e2e" stroke="#2e2e2e" stroke-width="0.3">700,0 mm</text><line x1="380" y1="343.5" x2="416" y2="343.5" stroke="#707070" stroke-width="1" /><line x1="380" y1="442.5" x2="406" y2="442.5" stroke="#707070" stroke-width="1" /><line x1="386.5" y1="343" x2="386.5" y2="385" stroke="#707070" stroke-width="1" /><line x1="386.5" y1="402" x2="386.5" y2="442" stroke="#707070" stroke-width="1" /><line x1="381" y1="338" x2="391" y2="348" stroke="#222" stroke-width="1.7" /><line x1="381" y1="447" x2="391" y2="437" stroke="#222" stroke-width="1.7" /><text x="0" y="0" transform="translate(355 399) scale(0.9915 1)" font-size="12.5" font-family="Liberation Sans" fill="#2e2e2e" stroke="#2e2e2e" stroke-width="0.3">1347,0 mm</text><line x1="567" y1="487.5" x2="586" y2="487.5" stroke="#707070" stroke-width="1" /><line x1="568.5" y1="295.6" x2="568.5" y2="354" stroke="#707070" stroke-width="1" /><line x1="568.5" y1="403" x2="568.5" y2="487.4" stroke="#707070" stroke-width="1" /><line x1="563.4" y1="492.4" x2="573.4" y2="482.4" stroke="#222" stroke-width="1.7" /><line x1="563.4" y1="482.4" x2="573.4" y2="492.4" stroke="#222" stroke-width="1.7" /><line x1="563.4" y1="300.6" x2="573.4" y2="290.6" stroke="#222" stroke-width="1.7" /><text x="0" y="0" transform="translate(537 398) scale(0.9210 1)" font-size="12.5" font-family="Liberation Sans" fill="#2e2e2e" stroke="#2e2e2e" stroke-width="0.3">2602,6 m</text><line x1="500" y1="435.5" x2="512" y2="435.5" stroke="#707070" stroke-width="1" /><line x1="574" y1="435.5" x2="586" y2="435.5" stroke="#707070" stroke-width="1" /><line x1="581" y1="440" x2="591" y2="430" stroke="#222" stroke-width="1.7" /><path d="M505 430L500 435L504 440" fill="none" stroke="#222" stroke-width="1.2" /><text x="0" y="0" transform="translate(515 440) scale(0.9091 1)" font-size="12.5" font-family="Liberation Sans" fill="#2e2e2e" stroke="#2e2e2e" stroke-width="0.3">1161,0 mm</text><line x1="703" y1="435.5" x2="715" y2="435.5" stroke="#707070" stroke-width="1" /><line x1="777" y1="435.5" x2="793" y2="435.5" stroke="#707070" stroke-width="1" /><line x1="698" y1="440" x2="708" y2="430" stroke="#222" stroke-width="1.7" /><line x1="788" y1="440" x2="798" y2="430" stroke="#222" stroke-width="1.7" /><text x="0" y="0" transform="translate(718 440) scale(0.9253 1)" font-size="12.5" font-family="Liberation Sans" fill="#2e2e2e" stroke="#2e2e2e" stroke-width="0.3">1172,0 mm</text><line x1="585.6" y1="516.5" x2="610" y2="516.5" stroke="#707070" stroke-width="1" /><line x1="679" y1="516.5" x2="703.6" y2="516.5" stroke="#707070" stroke-width="1" /><line x1="580.6" y1="521" x2="590.6" y2="511" stroke="#222" stroke-width="1.7" /><line x1="698.6" y1="521" x2="708.6" y2="511" stroke="#222" stroke-width="1.7" /><text x="0" y="0" transform="translate(613 521) scale(1.0075 1)" font-size="12.5" font-family="Liberation Sans" fill="#2e2e2e" stroke="#2e2e2e" stroke-width="0.3">1600,0 mm</text><line x1="585.5" y1="524.6" x2="585.5" y2="545" stroke="#707070" stroke-width="1" /><line x1="585.6" y1="544.5" x2="610" y2="544.5" stroke="#707070" stroke-width="1" /><line x1="679" y1="544.5" x2="706" y2="544.5" stroke="#707070" stroke-width="1" /><line x1="580.6" y1="549.5" x2="590.6" y2="539.5" stroke="#222" stroke-width="1.7" /><line x1="582" y1="548" x2="592" y2="538" stroke="#222" stroke-width="1.7" /><line x1="701" y1="549.5" x2="711" y2="539.5" stroke="#222" stroke-width="1.7" /><text x="0" y="0" transform="translate(613 550) scale(1.0075 1)" font-size="12.5" font-family="Liberation Sans" fill="#2e2e2e" stroke="#2e2e2e" stroke-width="0.3">1600,0 mm</text><line x1="688.5" y1="480" x2="688.5" y2="530" stroke="#707070" stroke-width="1" /><line x1="716.5" y1="480" x2="716.5" y2="532" stroke="#707070" stroke-width="1" /><line x1="683" y1="492.4" x2="693" y2="482.4" stroke="#222" stroke-width="1.7" /><line x1="683" y1="529.6" x2="693" y2="519.6" stroke="#222" stroke-width="1.7" /><line x1="711" y1="529.6" x2="721" y2="519.6" stroke="#222" stroke-width="1.7" /><line x1="711" y1="519.6" x2="721" y2="529.6" stroke="#222" stroke-width="1.7" /><line x1="701" y1="527" x2="711" y2="517" stroke="#222" stroke-width="1.7" /><line x1="704" y1="533" x2="714" y2="523" stroke="#222" stroke-width="1.7" /><text x="0" y="0" transform="translate(660 512) scale(1.1829 1)" font-size="12.5" font-family="Liberation Sans" fill="#2e2e2e" stroke="#2e2e2e" stroke-width="0.3">500,0</text><text x="0" y="0" transform="translate(684 512) scale(1.1335 1)" font-size="12.5" font-family="Liberation Sans" fill="#2e2e2e" stroke="#2e2e2e" stroke-width="0.3">500,0 mm</text><line x1="513.5" y1="551.6" x2="523.5" y2="541.6" stroke="#222" stroke-width="1.7" /><line x1="579.4" y1="550" x2="589.4" y2="540" stroke="#222" stroke-width="1.7" /><line x1="582" y1="548" x2="592" y2="538" stroke="#222" stroke-width="1.7" /><text x="0" y="0" transform="translate(525 552) scale(1.0076 1)" font-size="12.5" font-family="Liberation Sans" fill="#2e2e2e" stroke="#2e2e2e" stroke-width="0.3">912,5 mm</text><line x1="708.5" y1="525" x2="708.5" y2="563" stroke="#707070" stroke-width="1" /><line x1="708.5" y1="580" x2="708.5" y2="611" stroke="#707070" stroke-width="1" /><path d="M704 606L708 611L712 606" fill="none" stroke="#222" stroke-width="1.2" /><text x="0" y="0" transform="translate(679 574) scale(0.9740 1)" font-size="12.5" font-family="Liberation Sans" fill="#2e2e2e" stroke="#2e2e2e" stroke-width="0.3">1169,4 mm</text><line x1="380" y1="538.5" x2="459" y2="538.5" stroke="#707070" stroke-width="1" /><line x1="380" y1="648.5" x2="459" y2="648.5" stroke="#707070" stroke-width="1" /><line x1="384.5" y1="538.6" x2="384.5" y2="586" stroke="#707070" stroke-width="1" /><line x1="384.5" y1="603" x2="384.5" y2="648" stroke="#707070" stroke-width="1" /><line x1="379" y1="543.6" x2="389" y2="533.6" stroke="#222" stroke-width="1.7" /><line x1="379" y1="643" x2="389" y2="653" stroke="#222" stroke-width="1.7" /><text x="0" y="0" transform="translate(352 599) scale(1.0075 1)" font-size="12.5" font-family="Liberation Sans" fill="#2e2e2e" stroke="#2e2e2e" stroke-width="0.3">1470,0 mm</text><line x1="663" y1="630" x2="673" y2="620" stroke="#222" stroke-width="1.7" /><line x1="707" y1="617" x2="717" y2="607" stroke="#222" stroke-width="1.7" /><line x1="707" y1="630" x2="717" y2="620" stroke="#222" stroke-width="1.7" /><line x1="711" y1="645" x2="721" y2="635" stroke="#222" stroke-width="1.7" /><line x1="711" y1="635" x2="721" y2="645" stroke="#222" stroke-width="1.7" /><text x="0" y="0" transform="translate(661 628) scale(1.1155 1)" font-size="12.5" font-family="Liberation Sans" fill="#2e2e2e" stroke="#2e2e2e" stroke-width="0.3">600,0 mm</text><text x="0" y="0" transform="translate(712 631) scale(1.0368 1)" font-size="12.5" font-family="Liberation Sans" fill="#2e2e2e" stroke="#2e2e2e" stroke-width="0.3">0 mm</text><line x1="518.5" y1="646" x2="518.5" y2="680" stroke="#707070" stroke-width="1" /><line x1="513" y1="681" x2="523" y2="671" stroke="#222" stroke-width="1.7" /><path d="M473 678L468 674L473 670" fill="none" stroke="#222" stroke-width="1.2" /><text x="0" y="0" transform="translate(468 679) scale(0.9896 1)" font-size="12.5" font-family="Liberation Sans" fill="#2e2e2e" stroke="#2e2e2e" stroke-width="0.3">700,0 mm</text></g></svg>
<div class="a" style="left:1138px;top:98px;width:4px;height:715px;background:#f0f0f5;"></div>
<div class="a" style="left:1137px;top:124px;width:1px;height:689px;background:#d8d8de;"></div>
<div class="a" style="left:1142px;top:98px;width:458px;height:715px;background:#f0f0f5;border-left:1px solid #c8c8ce;border-top:1px solid #d0d0d6;"></div>
<div class="t" style="left:1147.50px;top:105.69px;font-size:11px;line-height:11px;color:#333;font-weight:bold;transform:scaleX(0.9805);transform-origin:0 0;">Palette par défaut</div>
<svg class="a" style="left:1576px;top:106px;" width="10" height="10" viewBox="0 0 10 10"><rect x="0.5" y="0.5" width="9" height="9" rx="1.5" fill="#fff" stroke="#777" stroke-width="1"/><path d="M3 2.5H7M5 2.5V7.5M3 5H7" stroke="#333" stroke-width="1.2"/></svg>
<svg class="a" style="left:1591px;top:106px;" width="9" height="10" viewBox="0 0 9 10"><rect x="0.5" y="0.5" width="9" height="9" rx="1.5" fill="#fff" stroke="#777" stroke-width="1"/><path d="M2.5 2.5L7 7M7 2.5L2.5 7" stroke="#555" stroke-width="1"/></svg>
<div class="a" style="left:1142px;top:123px;width:458px;height:1px;background:#b8b8be;"></div>
<div class="a" style="left:1143px;top:124px;width:448px;height:688px;background:#f3f5fb;"></div>
<div class="a" style="left:1142px;top:812px;width:458px;height:1px;background:#8a8a90;"></div>
<div class="a" style="left:1591px;top:124px;width:9px;height:688px;background:#fbfbfd;border-left:1px solid #d6d6dc;"></div>
<svg class="a" style="left:1592px;top:127px;" width="8" height="6" viewBox="0 0 8 6"><path d="M1 5L4 1.5L7 5Z" fill="#555"/></svg>
<svg class="a" style="left:1592px;top:798px;" width="8" height="6" viewBox="0 0 8 6"><path d="M1 1L4 4.5L7 1Z" fill="#555"/></svg>
<div class="a" style="left:1144px;top:124px;width:1447px;height:0px;background:none;"></div>
<div class="a" style="left:1144px;top:124px;width:447px;height:22px;background:#e1e1ea;"></div>
<svg class="a" style="left:1149px;top:131px;" width="11" height="7" viewBox="0 0 11 7"><path d="M1 1L5.5 5.5L10 1" fill="none" stroke="#555" stroke-width="1.2"/></svg>
<div class="t" style="left:1164.75px;top:131.07px;font-size:11.5px;line-height:11.5px;color:#555;transform:scaleX(0.9354);transform-origin:0 0;">Infos sur l'entité</div>
<svg class="a" style="left:1571px;top:126px;" width="18" height="18" viewBox="0 0 18 18"><rect x="0.5" y="0.5" width="17" height="17" rx="2" fill="#fff" stroke="#cfcfd6" stroke-width="1"/><path d="M5.5 5.5L12.5 12.5M12.5 5.5L5.5 12.5" stroke="#444" stroke-width="1"/></svg>
<div class="t" style="left:1151.00px;top:155.69px;font-size:11px;line-height:11px;color:#333;font-weight:bold;transform:scaleX(0.9333);transform-origin:0 0;">Aucune sélection</div>
<div class="a" style="left:1151px;top:174px;width:432px;height:1px;background:#dcdee6;"></div>
<div class="a" style="left:1144px;top:339.5px;width:1447px;height:0px;background:none;"></div>
<div class="a" style="left:1144px;top:339.5px;width:447px;height:21.0px;background:#e1e1ea;"></div>
<svg class="a" style="left:1149px;top:346px;" width="11" height="7" viewBox="0 0 11 7"><path d="M1 1L5.5 5.5L10 1" fill="none" stroke="#555" stroke-width="1.2"/></svg>
<div class="t" style="left:1164.75px;top:345.77px;font-size:11.5px;line-height:11.5px;color:#555;transform:scaleX(0.9298);transform-origin:0 0;">Matières</div>
<svg class="a" style="left:1571px;top:341.5px;" width="18" height="17.0" viewBox="0 0 18 17.0"><rect x="0.5" y="0.5" width="17" height="16.0" rx="2" fill="#fff" stroke="#cfcfd6" stroke-width="1"/><path d="M5.5 5.0L12.5 12.0M12.5 5.0L5.5 12.0" stroke="#444" stroke-width="1"/></svg>
<div class="a" style="left:1243px;top:377px;width:250px;height:124px;background:#474747;"></div>
<svg class="a" style="left:1243px;top:377px;" width="250" height="124" viewBox="0 0 250 124"><defs><linearGradient id="ct" x1="0" y1="0" x2="1" y2="1"><stop offset="0" stop-color="#4e4ef8"/><stop offset="1" stop-color="#5a5aff"/></linearGradient><linearGradient id="cl" x1="0" y1="0" x2="1" y2="1"><stop offset="0" stop-color="#3434d8"/><stop offset="1" stop-color="#2a2ac0"/></linearGradient></defs><path d="M125.5 3.6L180 29L126.4 66L71.5 30Z" fill="url(#ct)" stroke="#1a1a60" stroke-width="0.8"/><path d="M71.5 30L126.4 66L126.4 120L80.3 80.8Z" fill="url(#cl)" stroke="#1a1a60" stroke-width="0.8"/><path d="M180 29L126.4 66L126.4 120L172 83Z" fill="#2222d8" stroke="#1a1a60" stroke-width="0.8"/><rect x="212.5" y="87" width="25" height="25" rx="2" fill="#f4f4f4"/><path d="M222 90.5v5M219.5 93h5M228 96v10M223 101h10" stroke="#555" stroke-width="1.2"/></svg>
<div class="t" style="left:1160.00px;top:511.69px;font-size:11px;line-height:11px;color:#444;transform:scaleX(0.9904);transform-origin:0 0;">Nom</div>
<div class="a" style="left:1192px;top:507px;width:354px;height:21px;background:#fff;border:1px solid #c6c6cc;border-radius:2px;"></div>
<div class="t" style="left:1195.00px;top:512.19px;font-size:11px;line-height:11px;color:#222;transform:scaleX(0.9248);transform-origin:0 0;">I05_Twilight_Wave</div>
<svg class="a" style="left:1557px;top:510px;" width="16" height="16" viewBox="0 0 16 16"><rect x="1" y="1" width="9" height="11" rx="1" fill="#eef4fb" stroke="#5b8fc8" stroke-width="1"/><rect x="5" y="4" width="9" height="11" rx="1" fill="#eef4fb" stroke="#5b8fc8" stroke-width="1"/></svg>
<div class="a" style="left:1151px;top:540px;width:432px;height:1px;background:#dcdee6;"></div>
<div class="a" style="left:1151px;top:550px;width:79px;height:24px;background:#eceef4;border:1px solid #dcdee6;border-bottom:none;border-radius:3px 3px 0 0;"></div>
<div class="t" style="left:1161.00px;top:556.69px;font-size:11px;line-height:11px;color:#444;transform:scaleX(0.9485);transform-origin:0 0;">Sélectionner</div>
<div class="a" style="left:1230px;top:552px;width:47px;height:22px;background:#f8f9fc;border:1px solid #dcdee6;border-bottom:none;border-radius:3px 3px 0 0;"></div>
<div class="t" style="left:1240.00px;top:557.69px;font-size:11px;line-height:11px;color:#444;transform:scaleX(0.9744);transform-origin:0 0;">Éditer</div>
<svg class="a" style="left:1544px;top:552px;" width="16" height="17" viewBox="0 0 16 17"><path d="M2 15L4 11L11 4L13 6L6 13Z" fill="#d8a040" stroke="#333" stroke-width="1"/><path d="M11 4L13 2Q15 1 15 3L13 6Z" fill="#222"/></svg>
<svg class="a" style="left:1566px;top:552px;" width="12" height="17" viewBox="0 0 12 17"><rect x="1" y="1" width="10" height="15" rx="1" fill="#fff" stroke="#222" stroke-width="1.5"/><rect x="1" y="7" width="10" height="9" fill="#222"/><path d="M3.5 3H8.5L6 5.5Z" fill="#222"/><path d="M6 9V14M3.5 11.5H8.5" stroke="#fff" stroke-width="1.2"/></svg>
<div class="a" style="left:1151px;top:573px;width:432px;height:1px;background:#d6d8e0;"></div>
<svg class="a" style="left:1153px;top:577px;" width="16" height="16" viewBox="0 0 16 16"><circle cx="8" cy="8" r="6.3" fill="none" stroke="#222" stroke-width="1.5"/><path d="M8 4.5V11.5M4.5 8H11.5" stroke="#222" stroke-width="1.5"/></svg>
<svg class="a" style="left:1174px;top:577px;" width="16" height="16" viewBox="0 0 16 16"><path d="M8 1L14 4.5V11.5L8 15L2 11.5V4.5Z" fill="none" stroke="#333" stroke-width="1.4"/><path d="M8 4L11 6V10L8 12L5 10V6Z" fill="none" stroke="#555" stroke-width="1"/></svg>
<svg class="a" style="left:1195px;top:576px;" width="16" height="17" viewBox="0 0 16 17"><path d="M2 8L8 2L14 8" fill="none" stroke="#222" stroke-width="1.6"/><path d="M4 7V15H12V7" fill="none" stroke="#222" stroke-width="1.5"/><rect x="6.5" y="10" width="3" height="5" fill="#222"/></svg>
<div class="a" style="left:1214.6px;top:575px;width:347.4px;height:20px;background:#fff;border:1px solid #c6c6cc;border-radius:2px;"></div>
<div class="t" style="left:1218.00px;top:579.69px;font-size:11px;line-height:11px;color:#333;transform:scaleX(0.9404);transform-origin:0 0;">Couleurs unies</div>
<svg class="a" style="left:1548px;top:582px;" width="8" height="5" viewBox="0 0 8 5"><path d="M0 0H8L4 4Z" fill="#666"/></svg>
<svg class="a" style="left:1566px;top:577px;" width="16" height="16" viewBox="0 0 16 16"><rect x="1" y="3" width="10" height="11" rx="1" fill="#dfe8f5" stroke="#333" stroke-width="1.2"/><path d="M9 3L15 8.5L9 14Z" fill="#222"/></svg>
<div class="a" style="left:1151.4px;top:596.7px;width:431px;height:159px;background:#f8f9fc;border:1px solid #d6d8e0;"></div>
<div class="a" style="left:1570.7px;top:597.5px;width:11.5px;height:158px;background:#fdfdfe;border-left:1px solid #e0e0e6;"></div>
<svg class="a" style="left:1571px;top:599px;" width="11" height="8" viewBox="0 0 11 8"><path d="M2 6L5.5 2L9 6Z" fill="#666"/></svg>
<svg class="a" style="left:1571px;top:745px;" width="11" height="8" viewBox="0 0 11 8"><path d="M2 2L5.5 6L9 2Z" fill="#666"/></svg>
<div class="a" style="left:1572px;top:608px;width:9px;height:24px;background:#fff;border:1px solid #dcdce2;"></div>
<svg class="a" style="left:1151.4px;top:596.7px;" width="419" height="158" viewBox="0 0 419 158"><g transform="translate(5.0 3.9)"><rect x="0" y="0" width="52" height="52" fill="#474747"/><path d="M26 1.5L49 13.5L26 26L3 13.5Z" fill="#ffffff"/><path d="M3 13.5L26 26L26 50L5.5 38Z" fill="#d8b4b4"/><path d="M49 13.5L26 26L26 50L46.5 38Z" fill="#c8a0a0"/></g><g transform="translate(61.6 3.9)"><rect x="0" y="0" width="52" height="52" fill="#474747"/><path d="M26 1.5L49 13.5L26 26L3 13.5Z" fill="#ffc8cc"/><path d="M3 13.5L26 26L26 50L5.5 38Z" fill="#c88a8c"/><path d="M49 13.5L26 26L26 50L46.5 38Z" fill="#b87a7c"/></g><g transform="translate(118.6 3.9)"><rect x="0" y="0" width="52" height="52" fill="#474747"/><path d="M26 1.5L49 13.5L26 26L3 13.5Z" fill="#ff9a9a"/><path d="M3 13.5L26 26L26 50L5.5 38Z" fill="#d06a6a"/><path d="M49 13.5L26 26L26 50L46.5 38Z" fill="#c05a5a"/></g><g transform="translate(175.4 3.9)"><rect x="0" y="0" width="52" height="52" fill="#474747"/><path d="M26 1.5L49 13.5L26 26L3 13.5Z" fill="#ff5a5a"/><path d="M3 13.5L26 26L26 50L5.5 38Z" fill="#c83434"/><path d="M49 13.5L26 26L26 50L46.5 38Z" fill="#b82a2a"/></g><g transform="translate(232.1 3.9)"><rect x="0" y="0" width="52" height="52" fill="#474747"/><path d="M26 1.5L49 13.5L26 26L3 13.5Z" fill="#ff3a3a"/><path d="M3 13.5L26 26L26 50L5.5 38Z" fill="#d42424"/><path d="M49 13.5L26 26L26 50L46.5 38Z" fill="#c01c1c"/></g><g transform="translate(289.1 3.9)"><rect x="0" y="0" width="52" height="52" fill="#474747"/><path d="M26 1.5L49 13.5L26 26L3 13.5Z" fill="#ff4040"/><path d="M3 13.5L26 26L26 50L5.5 38Z" fill="#c02020"/><path d="M49 13.5L26 26L26 50L46.5 38Z" fill="#a81a1a"/></g><g transform="translate(345.6 3.9)"><rect x="0" y="0" width="52" height="52" fill="#474747"/><path d="M26 1.5L49 13.5L26 26L3 13.5Z" fill="#c85050"/><path d="M3 13.5L26 26L26 50L5.5 38Z" fill="#8a2828"/><path d="M49 13.5L26 26L26 50L46.5 38Z" fill="#782020"/></g><g transform="translate(5.0 61.1)"><rect x="0" y="0" width="52" height="52" fill="#474747"/><path d="M26 1.5L49 13.5L26 26L3 13.5Z" fill="#8a4a4a"/><path d="M3 13.5L26 26L26 50L5.5 38Z" fill="#5a2020"/><path d="M49 13.5L26 26L26 50L46.5 38Z" fill="#4a1a1a"/></g><g transform="translate(61.6 61.1)"><rect x="0" y="0" width="52" height="52" fill="#474747"/><path d="M26 1.5L49 13.5L26 26L3 13.5Z" fill="#ffffff"/><path d="M3 13.5L26 26L26 50L5.5 38Z" fill="#c8aaa4"/><path d="M49 13.5L26 26L26 50L46.5 38Z" fill="#b89a94"/></g><g transform="translate(118.6 61.1)"><rect x="0" y="0" width="52" height="52" fill="#474747"/><path d="M26 1.5L49 13.5L26 26L3 13.5Z" fill="#ffe4d0"/><path d="M3 13.5L26 26L26 50L5.5 38Z" fill="#c8a090"/><path d="M49 13.5L26 26L26 50L46.5 38Z" fill="#b89080"/></g><g transform="translate(175.4 61.1)"><rect x="0" y="0" width="52" height="52" fill="#474747"/><path d="M26 1.5L49 13.5L26 26L3 13.5Z" fill="#ffb890"/><path d="M3 13.5L26 26L26 50L5.5 38Z" fill="#d08868"/><path d="M49 13.5L26 26L26 50L46.5 38Z" fill="#c07858"/></g><g transform="translate(232.1 61.1)"><rect x="0" y="0" width="52" height="52" fill="#474747"/><path d="M26 1.5L49 13.5L26 26L3 13.5Z" fill="#ff9050"/><path d="M3 13.5L26 26L26 50L5.5 38Z" fill="#d06a38"/><path d="M49 13.5L26 26L26 50L46.5 38Z" fill="#c05a28"/></g><g transform="translate(289.1 61.1)"><rect x="0" y="0" width="52" height="52" fill="#474747"/><path d="M26 1.5L49 13.5L26 26L3 13.5Z" fill="#ff6a40"/><path d="M3 13.5L26 26L26 50L5.5 38Z" fill="#d04a24"/><path d="M49 13.5L26 26L26 50L46.5 38Z" fill="#c03a1a"/></g><g transform="translate(345.6 61.1)"><rect x="0" y="0" width="52" height="52" fill="#474747"/><path d="M26 1.5L49 13.5L26 26L3 13.5Z" fill="#ff6048"/><path d="M3 13.5L26 26L26 50L5.5 38Z" fill="#c83c2a"/><path d="M49 13.5L26 26L26 50L46.5 38Z" fill="#b8301e"/></g><g transform="translate(5.0 117.8)"><rect x="0" y="0" width="52" height="41" fill="#474747"/><path d="M26 1.5L49 13.5L26 26L3 13.5Z" fill="#d86058"/><path d="M3 13.5L26 26L26 50L5.5 38Z" fill="#a83a30"/><path d="M49 13.5L26 26L26 50L46.5 38Z" fill="#982c24"/></g><g transform="translate(61.6 117.8)"><rect x="0" y="0" width="52" height="41" fill="#474747"/><path d="M26 1.5L49 13.5L26 26L3 13.5Z" fill="#8a4a48"/><path d="M3 13.5L26 26L26 50L5.5 38Z" fill="#5a2624"/><path d="M49 13.5L26 26L26 50L46.5 38Z" fill="#4a1c1a"/></g><g transform="translate(118.6 117.8)"><rect x="0" y="0" width="52" height="41" fill="#474747"/><path d="M26 1.5L49 13.5L26 26L3 13.5Z" fill="#ffffff"/><path d="M3 13.5L26 26L26 50L5.5 38Z" fill="#b8a890"/><path d="M49 13.5L26 26L26 50L46.5 38Z" fill="#a89880"/></g><g transform="translate(175.4 117.8)"><rect x="0" y="0" width="52" height="41" fill="#474747"/><path d="M26 1.5L49 13.5L26 26L3 13.5Z" fill="#ffffd0"/><path d="M3 13.5L26 26L26 50L5.5 38Z" fill="#c8a878"/><path d="M49 13.5L26 26L26 50L46.5 38Z" fill="#b89868"/></g><g transform="translate(232.1 117.8)"><rect x="0" y="0" width="52" height="41" fill="#474747"/><path d="M26 1.5L49 13.5L26 26L3 13.5Z" fill="#ffe890"/><path d="M3 13.5L26 26L26 50L5.5 38Z" fill="#d0a050"/><path d="M49 13.5L26 26L26 50L46.5 38Z" fill="#c09040"/></g><g transform="translate(289.1 117.8)"><rect x="0" y="0" width="52" height="41" fill="#474747"/><path d="M26 1.5L49 13.5L26 26L3 13.5Z" fill="#ffc860"/><path d="M3 13.5L26 26L26 50L5.5 38Z" fill="#d09030"/><path d="M49 13.5L26 26L26 50L46.5 38Z" fill="#c08020"/></g><g transform="translate(345.6 117.8)"><rect x="0" y="0" width="52" height="41" fill="#474747"/><path d="M26 1.5L49 13.5L26 26L3 13.5Z" fill="#ffa040"/><path d="M3 13.5L26 26L26 50L5.5 38Z" fill="#d07020"/><path d="M49 13.5L26 26L26 50L46.5 38Z" fill="#c06010"/></g></svg>
<div class="a" style="left:1153.5px;top:598px;width:58px;height:58px;background:none;border:2px solid #2a6fd0;border-radius:1px;"></div>
<div class="a" style="left:1144px;top:769.5px;width:1447px;height:0px;background:none;"></div>
<div class="a" style="left:1144px;top:769.5px;width:447px;height:20.5px;background:#e1e1ea;"></div>
<svg class="a" style="left:1150px;top:774px;" width="7" height="11" viewBox="0 0 7 11"><path d="M1 1L5.5 5.5L1 10" fill="none" stroke="#555" stroke-width="1.2"/></svg>
<div class="t" style="left:1164.75px;top:775.02px;font-size:11.5px;line-height:11.5px;color:#555;transform:scaleX(0.8984);transform-origin:0 0;">Composants</div>
<svg class="a" style="left:1571px;top:771.5px;" width="18" height="16.5" viewBox="0 0 18 16.5"><rect x="0.5" y="0.5" width="17" height="15.5" rx="2" fill="#fff" stroke="#cfcfd6" stroke-width="1"/><path d="M5.5 4.75L12.5 11.75M12.5 4.75L5.5 11.75" stroke="#444" stroke-width="1"/></svg>
<div class="a" style="left:1144px;top:790.5px;width:1447px;height:0px;background:none;"></div>
<div class="a" style="left:1144px;top:790.5px;width:447px;height:20.5px;background:#e1e1ea;"></div>
<svg class="a" style="left:1150px;top:795px;" width="7" height="11" viewBox="0 0 7 11"><path d="M1 1L5.5 5.5L1 10" fill="none" stroke="#555" stroke-width="1.2"/></svg>
<div class="t" style="left:1164.75px;top:796.02px;font-size:11.5px;line-height:11.5px;color:#555;transform:scaleX(0.8303);transform-origin:0 0;">Styles</div>
<svg class="a" style="left:1571px;top:792.5px;" width="18" height="16.5" viewBox="0 0 18 16.5"><rect x="0.5" y="0.5" width="17" height="15.5" rx="2" fill="#fff" stroke="#cfcfd6" stroke-width="1"/><path d="M5.5 4.75L12.5 11.75M12.5 4.75L5.5 11.75" stroke="#444" stroke-width="1"/></svg>
<div class="a" style="left:0px;top:813px;width:1600px;height:49px;background:#f0f0f5;"></div>
<div class="a" style="left:1px;top:814px;width:250px;height:28px;background:#f1f1f6;border:1px solid #e0e0e6;"></div>
<div class="a" style="left:252px;top:814px;width:210px;height:28px;background:#f1f1f6;border:1px solid #e0e0e6;"></div>
<div class="a" style="left:459px;top:814px;width:37px;height:28px;background:#f1f1f6;border:1px solid #e0e0e6;"></div>
<svg class="a" style="left:3px;top:820px;" width="4" height="16" viewBox="0 0 4 16"><rect x="0" y="0" width="1" height="1" fill="#b8b8c0"/><rect x="3" y="0" width="1" height="1" fill="#b8b8c0"/><rect x="0" y="3" width="1" height="1" fill="#b8b8c0"/><rect x="3" y="3" width="1" height="1" fill="#b8b8c0"/><rect x="0" y="6" width="1" height="1" fill="#b8b8c0"/><rect x="3" y="6" width="1" height="1" fill="#b8b8c0"/><rect x="0" y="9" width="1" height="1" fill="#b8b8c0"/><rect x="3" y="9" width="1" height="1" fill="#b8b8c0"/><rect x="0" y="12" width="1" height="1" fill="#b8b8c0"/><rect x="3" y="12" width="1" height="1" fill="#b8b8c0"/><rect x="0" y="15" width="1" height="1" fill="#b8b8c0"/><rect x="3" y="15" width="1" height="1" fill="#b8b8c0"/></svg>
<div class="t" style="left:9.50px;top:823.19px;font-size:11px;line-height:11px;color:#444;transform:scaleX(0.9484);transform-origin:0 0;">Mesures</div>
<div class="a" style="left:114px;top:819.5px;width:133px;height:18px;background:#f3f3f7;border:1px solid #c0c0c6;border-radius:2px;"></div>
<div class="a" style="left:251px;top:814px;width:1px;height:28px;background:#e0e0e6;"></div>
<svg class="a" style="left:253px;top:820px;" width="4" height="16" viewBox="0 0 4 16"><rect x="0" y="0" width="1" height="1" fill="#b8b8c0"/><rect x="3" y="0" width="1" height="1" fill="#b8b8c0"/><rect x="0" y="3" width="1" height="1" fill="#b8b8c0"/><rect x="3" y="3" width="1" height="1" fill="#b8b8c0"/><rect x="0" y="6" width="1" height="1" fill="#b8b8c0"/><rect x="3" y="6" width="1" height="1" fill="#b8b8c0"/><rect x="0" y="9" width="1" height="1" fill="#b8b8c0"/><rect x="3" y="9" width="1" height="1" fill="#b8b8c0"/><rect x="0" y="12" width="1" height="1" fill="#b8b8c0"/><rect x="3" y="12" width="1" height="1" fill="#b8b8c0"/><rect x="0" y="15" width="1" height="1" fill="#b8b8c0"/><rect x="3" y="15" width="1" height="1" fill="#b8b8c0"/></svg>
<svg class="a" style="left:263px;top:820px;" width="16" height="16" viewBox="0 0 16 16"><path d="M2 3L13 1L15 13L4 15Z" fill="#8ad49a" stroke="#2a6a3a" stroke-width="1"/><path d="M5 6L7 8M7 6L5 8M9 5L11 7M11 5L9 7" stroke="#2a4a30" stroke-width="0.9"/><path d="M6 11Q9 9 12 11" fill="none" stroke="#2a4a30" stroke-width="1"/><path d="M9 11L11 13L12 11Z" fill="#d03030"/></svg>
<svg class="a" style="left:295px;top:820px;" width="16" height="16" viewBox="0 0 16 16"><path d="M2 3L13 1L15 13L4 15Z" fill="#8ad49a" stroke="#2a6a3a" stroke-width="1"/><path d="M5 6L7 8M7 6L5 8M9 5L11 7M11 5L9 7" stroke="#2a4a30" stroke-width="0.9"/><path d="M6 11Q9 9 12 11" fill="none" stroke="#2a4a30" stroke-width="1"/><path d="M9 11L11 13L12 11Z" fill="#d03030"/></svg>
<svg class="a" style="left:322px;top:820px;" width="16" height="16" viewBox="0 0 16 16"><path d="M2 3L13 1L15 13L4 15Z" fill="#8ad49a" stroke="#2a6a3a" stroke-width="1"/><path d="M5 6L7 8M7 6L5 8M9 5L11 7M11 5L9 7" stroke="#2a4a30" stroke-width="0.9"/><path d="M6 11Q9 9 12 11" fill="none" stroke="#2a4a30" stroke-width="1"/><path d="M9 11L11 13L12 11Z" fill="#d03030"/></svg>
<svg class="a" style="left:349px;top:820px;" width="16" height="16" viewBox="0 0 16 16"><path d="M2 3L13 1L15 13L4 15Z" fill="#8ad49a" stroke="#2a6a3a" stroke-width="1"/><path d="M5 6L7 8M7 6L5 8M9 5L11 7M11 5L9 7" stroke="#2a4a30" stroke-width="0.9"/><path d="M6 11Q9 9 12 11" fill="none" stroke="#2a4a30" stroke-width="1"/><path d="M9 11L11 13L12 11Z" fill="#d03030"/></svg>
<svg class="a" style="left:375px;top:820px;" width="16" height="16" viewBox="0 0 16 16"><path d="M2 3L13 1L15 13L4 15Z" fill="#8ad49a" stroke="#2a6a3a" stroke-width="1"/><path d="M5 6L7 8M7 6L5 8M9 5L11 7M11 5L9 7" stroke="#2a4a30" stroke-width="0.9"/><path d="M6 11Q9 9 12 11" fill="none" stroke="#2a4a30" stroke-width="1"/><path d="M9 11L11 13L12 11Z" fill="#d03030"/></svg>
<svg class="a" style="left:407px;top:820px;" width="16" height="16" viewBox="0 0 16 16"><path d="M2 3L13 1L15 13L4 15Z" fill="#8ad49a" stroke="#2a6a3a" stroke-width="1"/><path d="M5 6L7 8M7 6L5 8M9 5L11 7M11 5L9 7" stroke="#2a4a30" stroke-width="0.9"/><path d="M6 11Q9 9 12 11" fill="none" stroke="#2a4a30" stroke-width="1"/><path d="M9 11L11 13L12 11Z" fill="#d03030"/></svg>
<svg class="a" style="left:434px;top:820px;" width="16" height="16" viewBox="0 0 16 16"><path d="M2 3L13 1L15 13L4 15Z" fill="#8ad49a" stroke="#2a6a3a" stroke-width="1"/><path d="M5 6L7 8M7 6L5 8M9 5L11 7M11 5L9 7" stroke="#2a4a30" stroke-width="0.9"/><path d="M6 11Q9 9 12 11" fill="none" stroke="#2a4a30" stroke-width="1"/><path d="M9 11L11 13L12 11Z" fill="#d03030"/></svg>
<div class="a" style="left:288px;top:820px;width:2px;height:16px;background:#8a8a90;"></div>
<div class="a" style="left:400px;top:820px;width:2px;height:16px;background:#8a8a90;"></div>
<svg class="a" style="left:462px;top:820px;" width="4" height="16" viewBox="0 0 4 16"><rect x="0" y="0" width="1" height="1" fill="#b8b8c0"/><rect x="3" y="0" width="1" height="1" fill="#b8b8c0"/><rect x="0" y="3" width="1" height="1" fill="#b8b8c0"/><rect x="3" y="3" width="1" height="1" fill="#b8b8c0"/><rect x="0" y="6" width="1" height="1" fill="#b8b8c0"/><rect x="3" y="6" width="1" height="1" fill="#b8b8c0"/><rect x="0" y="9" width="1" height="1" fill="#b8b8c0"/><rect x="3" y="9" width="1" height="1" fill="#b8b8c0"/><rect x="0" y="12" width="1" height="1" fill="#b8b8c0"/><rect x="3" y="12" width="1" height="1" fill="#b8b8c0"/><rect x="0" y="15" width="1" height="1" fill="#b8b8c0"/><rect x="3" y="15" width="1" height="1" fill="#b8b8c0"/></svg>
<svg class="a" style="left:468px;top:815px;" width="28" height="26" viewBox="0 0 28 26"><path d="M2 2Q14 14 22 20" fill="none" stroke="#111" stroke-width="1.6"/><ellipse cx="23" cy="21" rx="2.5" ry="3" fill="none" stroke="#111" stroke-width="1.5"/></svg>
<div class="a" style="left:495px;top:814px;width:1px;height:28px;background:#e0e0e6;"></div>
<div class="a" style="left:7px;top:845px;width:1px;height:14px;background:#c8c8ce;"></div>
<div class="t" style="left:12.50px;top:846.84px;font-size:12px;line-height:12px;color:#444;transform:scaleX(0.9453);transform-origin:0 0;">Cliquez ou faites glisser pour sélectionner des objets. Maj = Ajouter/Soustraire. Ctrl = Ajouter. Maj + Ctrl = Soustraire.</div>
<div class="a" style="left:0px;top:862px;width:1600px;height:40px;background:repeating-linear-gradient(90deg,#35232b 0px,#33232c 30px,#2a2438 55px,#2b2437 80px,#35232b 100px);"></div>
<svg class="a" style="left:386px;top:872px;" width="21" height="21" viewBox="0 0 21 21"><defs><linearGradient id="wl" x1="0" y1="0" x2="1" y2="1"><stop offset="0" stop-color="#6ad8ff"/><stop offset="1" stop-color="#1a90e0"/></linearGradient></defs><rect x="0" y="0" width="9.6" height="9.6" fill="url(#wl)"/><rect x="10.6" y="0" width="9.6" height="9.6" fill="url(#wl)"/><rect x="0" y="10.6" width="9.6" height="9.6" fill="url(#wl)"/><rect x="10.6" y="10.6" width="9.6" height="9.6" fill="url(#wl)"/></svg>
<div class="a" style="left:417px;top:869px;width:183px;height:27px;background:#443a46;border-radius:14px;border:1px solid #4e4450;"></div>
<svg class="a" style="left:425px;top:875px;" width="14" height="14" viewBox="0 0 14 14"><circle cx="6" cy="6" r="4.5" fill="none" stroke="#eee" stroke-width="1.5"/><line x1="9.2" y1="9.2" x2="13" y2="13" stroke="#eee" stroke-width="1.6"/></svg>
<div class="t" style="left:447.00px;top:877.42px;font-size:12.5px;line-height:12.5px;color:#e8e4ea;transform:scaleX(0.8977);transform-origin:0 0;">Rechercher</div>
<svg class="a" style="left:609.5px;top:871.5px;" width="21" height="21" viewBox="0 0 21 21"><rect x="1" y="1" width="19" height="19" rx="2" fill="#2a7ee0"/><path d="M5 16V5H10Q13 5 13 8Q13 11 10 11H8L12 16" fill="none" stroke="#fff" stroke-width="2.2"/><text x="16.5" y="12" font-size="5" fill="#fff" font-family="Liberation Sans" transform="rotate(90 16.5 10)">VNC</text></svg>
<svg class="a" style="left:646.5px;top:871.5px;" width="21" height="21" viewBox="0 0 21 21"><rect x="1" y="1" width="19" height="19" rx="2.5" fill="#1f5a7a" stroke="#3a8aaa"/><path d="M13 5Q5 4 5 10.5Q5 17 13 16" fill="none" stroke="#fff" stroke-width="2.6"/><text x="11" y="17" font-size="7" fill="#e8b030" font-family="Liberation Sans">19</text></svg>
<svg class="a" style="left:683.5px;top:871.5px;" width="21" height="21" viewBox="0 0 21 21"><path d="M1 5H8L10 7H20V19H1Z" fill="#f0b820"/><rect x="1" y="9" width="19" height="10" fill="#ffd84a"/><rect x="6" y="14" width="9" height="5" fill="#2a7ad8"/></svg>
<svg class="a" style="left:720.5px;top:871.5px;" width="21" height="21" viewBox="0 0 21 21"><rect x="7" y="6" width="13" height="13" fill="#1a6ad0"/><rect x="1" y="8" width="10" height="10" rx="1" fill="#0a58c0"/><circle cx="6" cy="13" r="2.6" fill="none" stroke="#fff" stroke-width="1.4"/><circle cx="15" cy="5" r="5" fill="#f08080"/><rect x="14.2" y="1.8" width="1.6" height="4" fill="#222"/><rect x="14.2" y="6.5" width="1.6" height="1.4" fill="#222"/></svg>
<svg class="a" style="left:757.5px;top:871.5px;" width="21" height="21" viewBox="0 0 21 21"><circle cx="10.5" cy="10.5" r="9" fill="#333" stroke="#ddd" stroke-width="1.2"/><circle cx="10.5" cy="10.5" r="5" fill="none" stroke="#ddd" stroke-width="2"/><circle cx="8" cy="7" r="2.3" fill="#ddd"/><circle cx="13.5" cy="9" r="2.3" fill="#ddd"/><circle cx="9" cy="14" r="2.3" fill="#ddd"/></svg>
<svg class="a" style="left:793.5px;top:871.5px;" width="21" height="21" viewBox="0 0 21 21"><rect x="2" y="1" width="14" height="16" rx="1" fill="#fff"/><rect x="4" y="4" width="8" height="7" fill="none" stroke="#d02020" stroke-width="1.5" stroke-dasharray="2 1"/><circle cx="15" cy="17" r="2.5" fill="none" stroke="#3a9ae0" stroke-width="1.5"/><path d="M10 12L18 19" stroke="#3a9ae0" stroke-width="1.3"/></svg>
<svg class="a" style="left:830.5px;top:871.5px;" width="21" height="21" viewBox="0 0 21 21"><path d="M15 1L20 3.5V17.5L15 20L5 11L1 14L0 13V8L1 7L5 10Z" fill="#2a8ae0"/><path d="M15 6L8 10.5L15 15Z" fill="#2a2434"/></svg>
<svg class="a" style="left:867.5px;top:871.5px;" width="21" height="21" viewBox="0 0 21 21"><circle cx="12" cy="12" r="6" fill="#f08a20"/><circle cx="12" cy="12" r="3.2" fill="#fff"/><circle cx="12" cy="12" r="2" fill="#2a5a9a"/><path d="M1 11L8 7M4 15L8 12" stroke="#f08a20" stroke-width="2.4"/></svg>
<svg class="a" style="left:904.5px;top:871.5px;" width="21" height="21" viewBox="0 0 21 21"><rect x="1" y="1" width="19" height="19" rx="1" fill="#f4f4f4"/><path d="M4 7L10.5 4L17 7L10.5 10Z M4 10L10.5 13L17 10 M4 13L10.5 16L17 13" fill="none" stroke="#1a4f82" stroke-width="1.6"/></svg>
<svg class="a" style="left:940.5px;top:871.5px;" width="21" height="21" viewBox="0 0 21 21"><rect x="1" y="1" width="19" height="19" rx="1" fill="#f4f4f6"/><g transform="translate(1.5 1.5) scale(0.9)"><g fill="none" stroke="#1a6fb8" stroke-linejoin="round"><path d="M3 6.5 L10 2.5 L17 6.5 L17 13.5 L10 17.5" stroke-width="1.7"/><path d="M6.5 6.3 L10 4.6 L14.2 7 L14.2 12.3 L10 14.6" stroke-width="1.4"/><path d="M3 6.5 L10 10.5 L10 17.5" stroke-width="1.7"/><path d="M2.8 10 L8.5 13.2 M2.8 13.5 L8.5 16.6" stroke-width="1.7"/><path d="M10 10.5 L12 9.3 L12 12" stroke-width="1.2"/></g></g></svg>
<svg class="a" style="left:976.5px;top:871.5px;" width="21" height="21" viewBox="0 0 21 21"><rect x="5" y="1" width="15" height="19" rx="1" fill="#1f9a4a"/><rect x="10" y="1" width="10" height="9" fill="#3ac06a"/><rect x="1" y="7" width="10" height="11" rx="1" fill="#107a3a"/><text x="3" y="16" font-size="8" fill="#fff" font-family="Liberation Sans">x</text></svg>
<svg class="a" style="left:1014.5px;top:871.5px;" width="21" height="21" viewBox="0 0 21 21"><rect x="2" y="3" width="16" height="17" rx="2" fill="#c8202a"/><text x="5" y="15" font-size="11" font-weight="bold" fill="#fff" font-family="Liberation Sans">A</text><circle cx="16" cy="4.5" r="4.5" fill="#2a8ae0"/><rect x="15.3" y="3.5" width="1.4" height="3.5" fill="#fff"/></svg>
<svg class="a" style="left:1051.5px;top:871.5px;" width="21" height="21" viewBox="0 0 21 21"><path d="M1 2H16L20 6V19H1Z" fill="#5a8ad0"/><rect x="1" y="10" width="19" height="9" fill="#f0d070"/><rect x="4" y="2" width="10" height="6" fill="#fff"/><path d="M2 2Q6 1 9 5" stroke="#f0c040" stroke-width="3" fill="none"/></svg>
<svg class="a" style="left:1087.5px;top:871.5px;" width="21" height="21" viewBox="0 0 21 21"><path d="M3 3L10 11L17 3V17L10 11L3 17Z" fill="#8a4ae0"/><path d="M3 3L8 9L3 17Z" fill="#b87af0"/><circle cx="14" cy="16" r="4.5" fill="#2ab080"/><path d="M14 13V18.5M12 16.5L14 18.5L16 16.5" stroke="#fff" stroke-width="1.2" fill="none"/></svg>
<svg class="a" style="left:1124.5px;top:871.5px;" width="21" height="21" viewBox="0 0 21 21"><circle cx="10.5" cy="10.5" r="9.5" fill="#2a8ae0"/><path d="M3 12Q5 4 12 4Q19 5 19 11Q17 8 12 9Q7 10 8 15Q10 19 16 17Q10 21 5 17Z" fill="#4ad08a"/><path d="M6 11Q9 6 14 9" fill="none" stroke="#1a6ac0" stroke-width="2"/></svg>
<svg class="a" style="left:1161.5px;top:871.5px;" width="21" height="21" viewBox="0 0 21 21"><circle cx="10.5" cy="10.5" r="8.5" fill="none" stroke="#3ac85a" stroke-width="2.2"/><path d="M3 19L4.5 14" stroke="#3ac85a" stroke-width="2.2"/><path d="M7 7Q7 13 13 14L14.5 12.5L12.5 11L11.5 12Q9 11 8.5 9L9.5 8L8 6Z" fill="#3ac85a"/></svg>
<svg class="a" style="left:1199.5px;top:871.5px;" width="21" height="21" viewBox="0 0 21 21"><circle cx="10.5" cy="10.5" r="9.5" fill="#e23a2a"/><path d="M10.5 1A9.5 9.5 0 0 1 19 6H10.5Z" fill="#e23a2a"/><path d="M19.2 6.5A9.5 9.5 0 0 1 11 20L14.5 12Z" fill="#f0c020"/><path d="M1.8 6.5A9.5 9.5 0 0 0 11 20L6.5 12Z" fill="#2aa04a"/><circle cx="10.5" cy="10.5" r="4.2" fill="#fff"/><circle cx="10.5" cy="10.5" r="3.2" fill="#2a7ae0"/><circle cx="16" cy="5" r="3.5" fill="#e05050" stroke="#fff" stroke-width="0.8"/></svg>
<div class="a" style="left:938px;top:866px;width:29px;height:32px;background:rgba(255,255,255,0.08);border-radius:4px;"></div>
<div class="a" style="left:945px;top:895px;width:14px;height:2.4px;background:#f08a7a;border-radius:2px;"></div>
<div class="a" style="left:691px;top:895px;width:6px;height:2px;background:#9a9aa0;border-radius:1px;"></div>
<div class="a" style="left:728px;top:895px;width:6px;height:2px;background:#9a9aa0;border-radius:1px;"></div>
<div class="a" style="left:1022px;top:895px;width:6px;height:2px;background:#9a9aa0;border-radius:1px;"></div>
<div class="t" style="left:1544.00px;top:870.19px;font-size:11px;line-height:11px;color:#fff;transform:scaleX(0.8356);transform-origin:0 0;">08:21</div>
<div class="t" style="left:1516.40px;top:883.19px;font-size:11px;line-height:11px;color:#fff;transform:scaleX(0.9192);transform-origin:0 0;">17/03/2026</div>
<svg class="a" style="left:1574px;top:873px;" width="15" height="17" viewBox="0 0 15 17"><path d="M3 12V7Q3 3 7.5 3Q12 3 12 7V12L13.5 14H1.5Z" fill="none" stroke="#fff" stroke-width="1.3"/><path d="M6 15.5Q7.5 17 9 15.5" stroke="#fff" stroke-width="1.2" fill="none"/><text x="10" y="6" font-size="5" fill="#fff" font-family="Liberation Sans">z</text></svg>
</body></html>
